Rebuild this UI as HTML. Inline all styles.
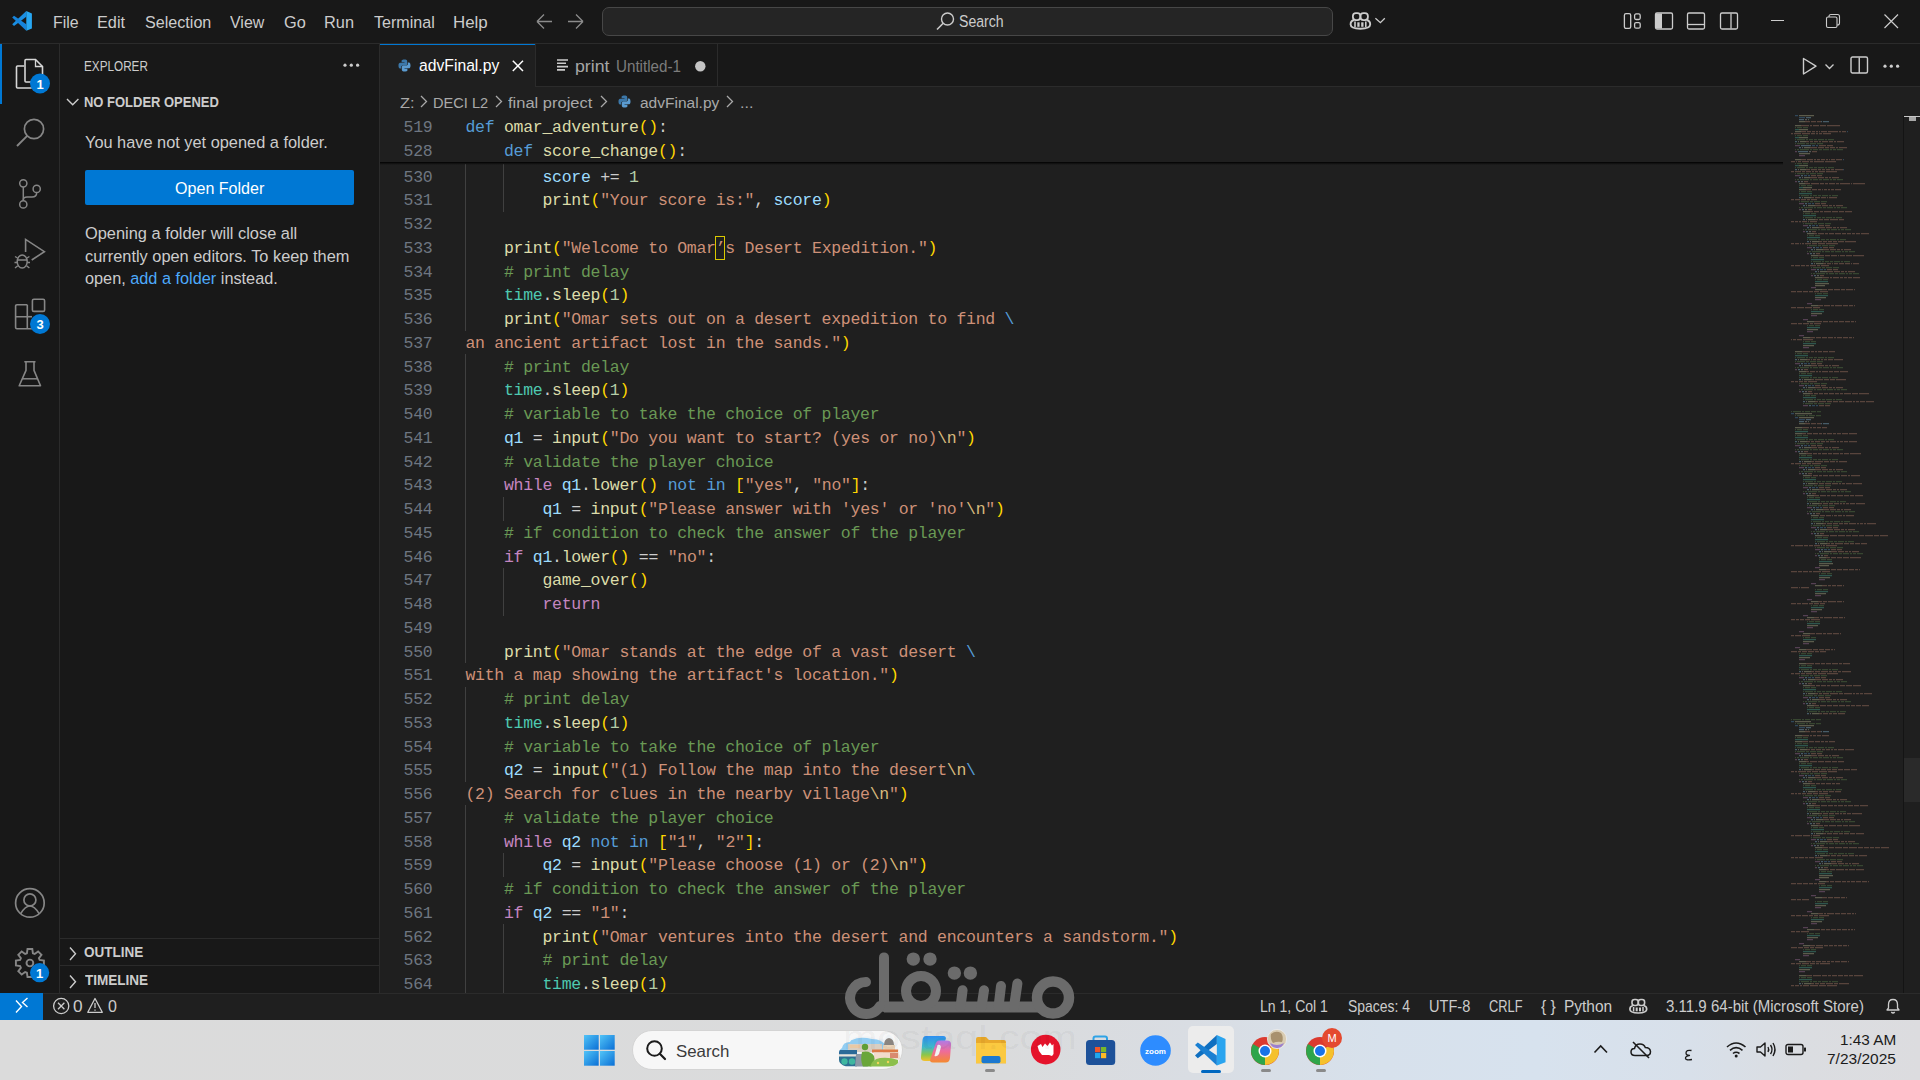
<!DOCTYPE html>
<html><head><meta charset="utf-8"><style>
*{margin:0;padding:0;box-sizing:border-box}
html,body{width:1920px;height:1080px;overflow:hidden;background:#1f1f1f;font-family:"Liberation Sans", sans-serif}
.t{position:absolute;white-space:pre;transform-origin:0 0}
.abs{position:absolute}
.code{position:absolute;left:465.4px;white-space:pre;font-family:"Liberation Mono", monospace;font-size:16.5px;letter-spacing:-0.275px;color:#cccccc;height:23.75px;line-height:23.75px}
.ln{position:absolute;width:60px;text-align:right;white-space:pre;font-family:"Liberation Mono", monospace;font-size:16.5px;letter-spacing:-0.275px;color:#6e7681;line-height:23.75px;height:23.75px}
.box{color:#ce9178}
svg{position:absolute;overflow:visible}
</style></head>
<body><div class="abs" style="left:0px;top:0px;width:1920px;height:43px;background:#181818;"></div><div class="abs" style="left:0px;top:43px;width:1920px;height:1px;background:#2b2b2b;"></div><div class="abs" style="left:0px;top:44px;width:60px;height:949px;background:#181818;"></div><div class="abs" style="left:59px;top:44px;width:1px;height:949px;background:#2b2b2b;"></div><div class="abs" style="left:60px;top:44px;width:320px;height:949px;background:#181818;"></div><div class="abs" style="left:379px;top:44px;width:1px;height:949px;background:#2b2b2b;"></div><div class="abs" style="left:380px;top:44px;width:1540px;height:43px;background:#181818;"></div><div class="abs" style="left:380px;top:86px;width:1540px;height:1px;background:#2b2b2b;"></div><div class="abs" style="left:380px;top:44px;width:155px;height:43px;background:#1f1f1f;"></div><div class="abs" style="left:380px;top:44px;width:155px;height:1px;background:#0078d4;"></div><div class="abs" style="left:535px;top:44px;width:1px;height:43px;background:#2b2b2b;"></div><div class="abs" style="left:717px;top:44px;width:1px;height:43px;background:#2b2b2b;"></div><div class="abs" style="left:0px;top:993px;width:1920px;height:27px;background:#1f1f1f;"></div><div class="abs" style="left:0px;top:993px;width:1920px;height:1px;background:#2b2b2b;"></div><div class="abs" style="left:0px;top:993px;width:43px;height:27px;background:#0078d4;"></div><div class="abs" style="left:0px;top:1020px;width:1920px;height:60px;background:linear-gradient(90deg,#dbdbdb 0%,#dadbdc 52%,#d9dde3 62%,#d7e1ec 72%,#d7e2ee 80%,#d8e0ea 88%,#dbdde1 94%,#dcdcdf 100%);"></div><svg style="left:0px;top:0px;" width="40" height="40" viewBox="0 0 40 40"><path d="M26.3 11 L26.3 16.8 L14 26 L12.2 24.2 Z" fill="#1a8fe3"/><path d="M12.2 17.5 L14 15.8 L26.3 24.3 L26.3 30.7 Z" fill="#1684dc"/><path d="M26.3 11 L31.9 13.5 V28.5 L26.3 30.7 Z" fill="#28a8f3"/></svg><div class="t" style="left:52.63px;top:10.87px;font-size:16.25px;line-height:23px;color:#cccccc;font-weight:normal;transform:scaleX(0.9788)">File</div><div class="t" style="left:97.00px;top:10.87px;font-size:16.25px;line-height:23px;color:#cccccc;font-weight:normal;transform:scaleX(1.0019)">Edit</div><div class="t" style="left:144.69px;top:10.87px;font-size:16.25px;line-height:23px;color:#cccccc;font-weight:normal;transform:scaleX(0.9923)">Selection</div><div class="t" style="left:230.44px;top:10.87px;font-size:16.25px;line-height:23px;color:#cccccc;font-weight:normal;transform:scaleX(0.9806)">View</div><div class="t" style="left:283.78px;top:10.87px;font-size:16.25px;line-height:23px;color:#cccccc;font-weight:normal;transform:scaleX(1.0043)">Go</div><div class="t" style="left:324.49px;top:10.87px;font-size:16.25px;line-height:23px;color:#cccccc;font-weight:normal;transform:scaleX(1.0050)">Run</div><div class="t" style="left:374.18px;top:10.87px;font-size:16.25px;line-height:23px;color:#cccccc;font-weight:normal;transform:scaleX(0.9896)">Terminal</div><div class="t" style="left:453.05px;top:10.87px;font-size:16.25px;line-height:23px;color:#cccccc;font-weight:normal;transform:scaleX(1.0404)">Help</div><svg style="left:536px;top:13px;" width="48" height="17" viewBox="0 0 48 17"><path d="M1 8.5 H16 M1 8.5 L8 1.5 M1 8.5 L8 15.5" stroke="#8b8b8b" stroke-width="1.3" fill="none"/><path d="M32 8.5 H47 M47 8.5 L40 1.5 M47 8.5 L40 15.5" stroke="#8b8b8b" stroke-width="1.3" fill="none"/></svg><div class="abs" style="left:602px;top:7px;width:731px;height:29px;background:#252525;border:1px solid #474747;border-radius:7px"></div><svg style="left:936px;top:12px;" width="19" height="19" viewBox="0 0 19 19"><circle cx="11.5" cy="7" r="6" stroke="#cccccc" stroke-width="1.4" fill="none"/><path d="M7.2 11.3 L1 17.5" stroke="#cccccc" stroke-width="1.6"/></svg><div class="t" style="left:959.30px;top:10.47px;font-size:16.25px;line-height:23px;color:#cccccc;font-weight:normal;transform:scaleX(0.8676)">Search</div><svg style="left:1348px;top:10px;" width="40" height="22" viewBox="0 0 40 22"><rect x="4.9" y="3.1" width="7.5" height="7" rx="3" stroke="#cccccc" stroke-width="1.8" fill="none"/><rect x="12.4" y="3.1" width="7.5" height="7" rx="3" stroke="#cccccc" stroke-width="1.8" fill="none"/><path d="M6 10 Q2.5 11 2.6 14.5 Q2.8 18.6 12.4 18.8 Q22 18.6 22.2 14.5 Q22.3 11 18.8 10" stroke="#cccccc" stroke-width="1.9" fill="none"/><path d="M7 11.5 V17" stroke="#cccccc" stroke-width="1.6"/><path d="M17.8 11.5 V17" stroke="#cccccc" stroke-width="1.6"/><rect x="9.3" y="12.3" width="2.3" height="4.5" fill="#cccccc"/><rect x="13.2" y="12.3" width="2.3" height="4.5" fill="#cccccc"/><path d="M27.4 8.2 L32.4 12.7 L36.8 8.2" stroke="#cccccc" stroke-width="1.3" fill="none"/></svg><svg style="left:1622px;top:11px;" width="120" height="20" viewBox="0 0 120 20">
<rect x="2.4" y="2.6" width="6.3" height="14.8" rx="1.6" stroke="#cccccc" stroke-width="1.3" fill="none"/>
<rect x="12.6" y="2.9" width="5.6" height="5.6" rx="1.5" stroke="#cccccc" stroke-width="1.3" fill="none"/>
<rect x="12.6" y="11.6" width="5.6" height="5.6" rx="1.5" stroke="#cccccc" stroke-width="1.3" fill="none"/>
<rect x="33.5" y="2" width="17" height="16" rx="1.5" stroke="#cccccc" stroke-width="1.3" fill="none"/>
<rect x="34" y="2.5" width="6" height="15" fill="#cccccc"/>
<rect x="65.5" y="2" width="17" height="16" rx="1.5" stroke="#cccccc" stroke-width="1.3" fill="none"/>
<path d="M66 13.5 H82" stroke="#cccccc" stroke-width="1.3"/>
<rect x="98.5" y="2" width="17" height="16" rx="1.5" stroke="#cccccc" stroke-width="1.3" fill="none"/>
<path d="M109 2.5 V17.5" stroke="#cccccc" stroke-width="1.3"/>
</svg><div class="abs" style="left:1771px;top:20px;width:13px;height:1px;background:#cccccc;"></div><svg style="left:1826px;top:14px;" width="16" height="16" viewBox="0 0 16 16"><rect x="0.5" y="3" width="10.5" height="10.5" rx="1.5" stroke="#cccccc" stroke-width="1.1" fill="none"/><path d="M3 3 V2.5 Q3 0.5 5 0.5 H11.5 Q13.5 0.5 13.5 2.5 V9 Q13.5 11 11.5 11 H11" stroke="#cccccc" stroke-width="1.1" fill="none"/></svg><svg style="left:1884px;top:14px;" width="16" height="16" viewBox="0 0 16 16"><path d="M0.5 0.5 L14 14 M14 0.5 L0.5 14" stroke="#cccccc" stroke-width="1.2"/></svg><div class="abs" style="left:0px;top:44px;width:2px;height:60px;background:#0078d4;"></div><svg style="left:14px;top:57px;" width="32" height="36" viewBox="0 0 32 36">
<path d="M10 9 H3.5 Q2.5 9 2.5 10 V30 Q2.5 31 3.5 31 H17 Q18 31 18 30 V25" stroke="#d7d7d7" stroke-width="1.6" fill="none"/>
<path d="M11 3.5 Q11 2.5 12 2.5 H21.5 L28.5 9.5 V24 Q28.5 25 27.5 25 H12 Q11 25 11 24 Z" stroke="#d7d7d7" stroke-width="1.6" fill="none"/>
<path d="M21.5 2.5 V9.5 H28.5" stroke="#d7d7d7" stroke-width="1.3" fill="none"/>
</svg><svg style="left:30px;top:73px;" width="20" height="21" viewBox="0 0 20 21"><circle cx="10" cy="10.5" r="10" fill="#0078d4"/><text x="10" y="15.5" text-anchor="middle" font-family="Liberation Sans" font-weight="bold" font-size="13" fill="#ffffff">1</text></svg><svg style="left:14px;top:116px;" width="32" height="34" viewBox="0 0 32 34"><circle cx="20" cy="13" r="9.6" stroke="#868686" stroke-width="1.7" fill="none"/><path d="M13.2 19.8 L3 30" stroke="#868686" stroke-width="1.9"/></svg><svg style="left:14px;top:176px;" width="30" height="34" viewBox="0 0 30 34">
<circle cx="9.3" cy="7.3" r="3.6" stroke="#868686" stroke-width="1.5" fill="none"/>
<circle cx="22.7" cy="12.9" r="3.6" stroke="#868686" stroke-width="1.5" fill="none"/>
<circle cx="9.3" cy="28.4" r="3.6" stroke="#868686" stroke-width="1.5" fill="none"/>
<path d="M9.3 11 V24.8" stroke="#868686" stroke-width="1.5"/>
<path d="M22.7 16.5 Q22.7 21 18 21 H13 Q9.3 21 9.3 24" stroke="#868686" stroke-width="1.5" fill="none"/>
</svg><svg style="left:10px;top:236px;" width="40" height="36" viewBox="0 0 40 36">
<path d="M15.6 16 V3.4 L34.4 15.7 L21.7 24" stroke="#868686" stroke-width="1.6" fill="none" stroke-linejoin="miter"/>
<ellipse cx="12.2" cy="25.5" rx="5" ry="6.5" stroke="#868686" stroke-width="1.5" fill="none"/>
<path d="M7.2 24 H17.2 M5 20.5 L7.5 22 M19.4 20.5 L17 22 M4.5 26.5 H7.2 M17.2 26.5 H20 M5 32 L7.8 29.8 M19.4 32 L16.6 29.8" stroke="#868686" stroke-width="1.4"/>
</svg><svg style="left:14px;top:297px;" width="32" height="34" viewBox="0 0 32 34">
<rect x="18.4" y="2.2" width="12.2" height="12.2" rx="1.5" stroke="#868686" stroke-width="1.6" fill="none"/>
<path d="M3 7.8 Q1.6 7.8 1.6 9.2 V30.5 Q1.6 31.7 3 31.7 H18 M1.6 19.7 H13.3 M13.3 7.8 H3 M13.3 7.8 V31.7" stroke="#868686" stroke-width="1.6" fill="none"/>
<path d="M13.3 19.7 H18" stroke="#868686" stroke-width="1.6"/>
</svg><svg style="left:30px;top:314px;" width="20" height="21" viewBox="0 0 20 21"><circle cx="10" cy="10" r="10" fill="#0078d4"/><text x="10" y="14.8" text-anchor="middle" font-family="Liberation Sans" font-weight="bold" font-size="13" fill="#ffffff">3</text></svg><svg style="left:16px;top:358px;" width="30" height="32" viewBox="0 0 30 32">
<path d="M8.3 3.8 H19.5 M10 3.8 V12.4 L3.2 27.7 H24.5 L18 12.4 V3.8" stroke="#868686" stroke-width="1.6" fill="none" stroke-linejoin="round"/>
<path d="M6.5 20.8 H21" stroke="#868686" stroke-width="1.5"/>
</svg><svg style="left:13px;top:886px;" width="34" height="34" viewBox="0 0 34 34"><circle cx="16.9" cy="16.9" r="14.3" stroke="#868686" stroke-width="1.7" fill="none"/><circle cx="16.9" cy="13.9" r="6" stroke="#868686" stroke-width="1.7" fill="none"/><path d="M7.7 27.6 Q16.9 12.4 26.1 27.6" stroke="#868686" stroke-width="1.7" fill="none"/></svg><svg style="left:13px;top:946px;" width="34" height="34" viewBox="0 0 34 34"><polygon points="13.89,7.26 14.50,3.00 19.30,3.00 19.91,7.26 21.66,7.98 25.10,5.41 28.49,8.80 25.92,12.24 26.64,13.99 30.90,14.60 30.90,19.40 26.64,20.01 25.92,21.76 28.49,25.20 25.10,28.59 21.66,26.02 19.91,26.74 19.30,31.00 14.50,31.00 13.89,26.74 12.14,26.02 8.70,28.59 5.31,25.20 7.88,21.76 7.16,20.01 2.90,19.40 2.90,14.60 7.16,13.99 7.88,12.24 5.31,8.80 8.70,5.41 12.14,7.98" stroke="#868686" stroke-width="1.9" fill="none" stroke-linejoin="miter"/><circle cx="16.9" cy="17" r="3.4" stroke="#868686" stroke-width="1.9" fill="none"/></svg><svg style="left:30px;top:963px;" width="20" height="20" viewBox="0 0 20 20"><circle cx="9.6" cy="9.7" r="9.6" fill="#0078d4"/><text x="9.6" y="14.5" text-anchor="middle" font-family="Liberation Sans" font-weight="bold" font-size="13" fill="#ffffff">1</text></svg><div class="t" style="left:84.46px;top:57.03px;font-size:13.75px;line-height:19px;color:#cccccc;font-weight:normal;transform:scaleX(0.8533)">EXPLORER</div><svg style="left:343px;top:63px;" width="18" height="5" viewBox="0 0 18 5"><circle cx="2" cy="2.2" r="1.6" fill="#cccccc"/><circle cx="8.3" cy="2.2" r="1.6" fill="#cccccc"/><circle cx="14.6" cy="2.2" r="1.6" fill="#cccccc"/></svg><svg style="left:66px;top:97px;" width="14" height="10" viewBox="0 0 14 10"><path d="M1 2 L6.7 7.7 L12.4 2" stroke="#cccccc" stroke-width="1.4" fill="none"/></svg><div class="t" style="left:84.49px;top:92.53px;font-size:13.75px;line-height:19px;color:#cccccc;font-weight:bold;transform:scaleX(0.9438)">NO FOLDER OPENED</div><div class="t" style="left:85.07px;top:131.17px;font-size:16.25px;line-height:23px;color:#cccccc;font-weight:normal;transform:scaleX(1.0056)">You have not yet opened a folder.</div><div class="abs" style="left:85px;top:170px;width:269px;height:35px;background:#0078d4;border-radius:2px"></div><div class="t" style="left:174.60px;top:176.67px;font-size:16.25px;line-height:23px;color:#ffffff;font-weight:normal;transform:scaleX(0.9891)">Open Folder</div><div class="t" style="left:84.58px;top:221.87px;font-size:16.25px;line-height:23px;color:#cccccc;font-weight:normal;transform:scaleX(1.0084)">Opening a folder will close all</div><div class="t" style="left:84.75px;top:244.67px;font-size:16.25px;line-height:23px;color:#cccccc;font-weight:normal;transform:scaleX(1.0069)">currently open editors. To keep them</div><div class="t" style="left:84.75px;top:267.37px;font-size:16.25px;line-height:23px;color:#cccccc;font-weight:normal;transform:scaleX(1.0016)">open, <span style="color:#4daafc">add a folder</span> instead.</div><div class="abs" style="left:60px;top:938px;width:319px;height:1px;background:#2b2b2b;"></div><div class="abs" style="left:60px;top:965px;width:319px;height:1px;background:#2b2b2b;"></div><svg style="left:68px;top:946px;" width="10" height="16" viewBox="0 0 10 16"><path d="M2 1.5 L7.5 7.7 L2 14" stroke="#cccccc" stroke-width="1.4" fill="none"/></svg><div class="t" style="left:84.46px;top:942.73px;font-size:13.75px;line-height:19px;color:#cccccc;font-weight:bold;transform:scaleX(0.9838)">OUTLINE</div><svg style="left:68px;top:974px;" width="10" height="16" viewBox="0 0 10 16"><path d="M2 1.5 L7.5 7.7 L2 14" stroke="#cccccc" stroke-width="1.4" fill="none"/></svg><div class="t" style="left:84.86px;top:970.53px;font-size:13.75px;line-height:19px;color:#cccccc;font-weight:bold;transform:scaleX(0.9839)">TIMELINE</div><svg style="left:398px;top:58.75px;" width="13" height="13" viewBox="0 0 13 13"><path d="M6.4 0.5 C3.5 0.5 3.6 1.8 3.6 1.8 V3.2 H6.5 V3.7 H2.3 C2.3 3.7 0.5 3.5 0.5 6.6 C0.5 9.7 2.1 9.6 2.1 9.6 H3.2 V8.1 C3.2 8.1 3.1 6.5 4.8 6.5 H7.6 C7.6 6.5 9.2 6.5 9.2 5 V2.2 C9.2 2.2 9.4 0.5 6.4 0.5 Z" fill="#3c78aa"/>
<path d="M6.6 12.5 C9.5 12.5 9.4 11.2 9.4 11.2 V9.8 H6.5 V9.3 H10.7 C10.7 9.3 12.5 9.5 12.5 6.4 C12.5 3.3 10.9 3.4 10.9 3.4 H9.8 V4.9 C9.8 4.9 9.9 6.5 8.2 6.5 H5.4 C5.4 6.5 3.8 6.5 3.8 8 V10.8 C3.8 10.8 3.6 12.5 6.6 12.5 Z" fill="#5b9bd0"/></svg><div class="t" style="left:419.37px;top:54.12px;font-size:16.25px;line-height:23px;color:#ffffff;font-weight:normal;transform:scaleX(0.9662)">advFinal.py</div><svg style="left:511.5px;top:60.3px;" width="12" height="12" viewBox="0 0 12 12"><path d="M0.8 0.8 L11 11 M11 0.8 L0.8 11" stroke="#ffffff" stroke-width="1.5"/></svg><svg style="left:557px;top:59px;" width="12" height="12" viewBox="0 0 12 12"><path d="M0 1 H11 M0 4.3 H9 M0 7.6 H11 M0 10.9 H8" stroke="#cccccc" stroke-width="1.6"/></svg><div class="t" style="left:575.34px;top:54.97px;font-size:16.25px;line-height:23px;color:#a6a6a6;font-weight:normal;transform:scaleX(1.0900)">print</div><div class="t" style="left:616.29px;top:54.97px;font-size:16.25px;line-height:23px;color:#7c7c7c;font-weight:normal;transform:scaleX(0.9342)">Untitled-1</div><svg style="left:694.5px;top:60.7px;" width="11" height="11" viewBox="0 0 11 11"><circle cx="5.3" cy="5.3" r="5.2" fill="#c4c4c4"/></svg><svg style="left:1802px;top:57px;" width="36" height="20" viewBox="0 0 36 20"><path d="M1.5 1.5 L14 9.2 L1.5 17 Z" stroke="#cccccc" stroke-width="1.4" fill="none" stroke-linejoin="round"/><path d="M23.5 7.5 L27.5 11.5 L31.5 7.5" stroke="#cccccc" stroke-width="1.3" fill="none"/></svg><svg style="left:1850px;top:56px;" width="20" height="20" viewBox="0 0 20 20"><rect x="1" y="1" width="16.5" height="16" rx="1.5" stroke="#cccccc" stroke-width="1.4" fill="none"/><path d="M9.25 1.5 V17" stroke="#cccccc" stroke-width="1.4"/></svg><svg style="left:1883px;top:64px;" width="18" height="5" viewBox="0 0 18 5"><circle cx="2" cy="2.2" r="1.6" fill="#cccccc"/><circle cx="8.3" cy="2.2" r="1.6" fill="#cccccc"/><circle cx="14.6" cy="2.2" r="1.6" fill="#cccccc"/></svg><div class="t" style="left:399.51px;top:91.63px;font-size:15.5px;line-height:22px;color:#a9a9a9;font-weight:normal;transform:scaleX(1.0557)">Z:</div><svg style="left:419.5px;top:95px;" width="8" height="13" viewBox="0 0 8 13"><path d="M1 1 L6.5 6.5 L1 12" stroke="#a9a9a9" stroke-width="1.3" fill="none"/></svg><div class="t" style="left:432.58px;top:91.63px;font-size:15.5px;line-height:22px;color:#a9a9a9;font-weight:normal;transform:scaleX(0.9412)">DECI L2</div><svg style="left:494.5px;top:95px;" width="8" height="13" viewBox="0 0 8 13"><path d="M1 1 L6.5 6.5 L1 12" stroke="#a9a9a9" stroke-width="1.3" fill="none"/></svg><div class="t" style="left:508.24px;top:91.63px;font-size:15.5px;line-height:22px;color:#a9a9a9;font-weight:normal;transform:scaleX(1.0639)">final project</div><svg style="left:599.5px;top:95px;" width="8" height="13" viewBox="0 0 8 13"><path d="M1 1 L6.5 6.5 L1 12" stroke="#a9a9a9" stroke-width="1.3" fill="none"/></svg><svg style="left:618px;top:94.5px;" width="13" height="13" viewBox="0 0 13 13"><path d="M6.4 0.5 C3.5 0.5 3.6 1.8 3.6 1.8 V3.2 H6.5 V3.7 H2.3 C2.3 3.7 0.5 3.5 0.5 6.6 C0.5 9.7 2.1 9.6 2.1 9.6 H3.2 V8.1 C3.2 8.1 3.1 6.5 4.8 6.5 H7.6 C7.6 6.5 9.2 6.5 9.2 5 V2.2 C9.2 2.2 9.4 0.5 6.4 0.5 Z" fill="#3c78aa"/>
<path d="M6.6 12.5 C9.5 12.5 9.4 11.2 9.4 11.2 V9.8 H6.5 V9.3 H10.7 C10.7 9.3 12.5 9.5 12.5 6.4 C12.5 3.3 10.9 3.4 10.9 3.4 H9.8 V4.9 C9.8 4.9 9.9 6.5 8.2 6.5 H5.4 C5.4 6.5 3.8 6.5 3.8 8 V10.8 C3.8 10.8 3.6 12.5 6.6 12.5 Z" fill="#5b9bd0"/></svg><div class="t" style="left:640.38px;top:91.63px;font-size:15.5px;line-height:22px;color:#a9a9a9;font-weight:normal;transform:scaleX(1.0002)">advFinal.py</div><svg style="left:726px;top:95px;" width="8" height="13" viewBox="0 0 8 13"><path d="M1 1 L6.5 6.5 L1 12" stroke="#a9a9a9" stroke-width="1.3" fill="none"/></svg><div class="t" style="left:739.55px;top:91.63px;font-size:15.5px;line-height:22px;color:#a9a9a9;font-weight:normal;transform:scaleX(1.0362)">...</div><div class="abs" style="left:465px;top:164.00px;width:1px;height:24.25px;background:#404040"></div><div class="abs" style="left:503px;top:164.00px;width:1px;height:24.25px;background:#404040"></div><div class="ln" style="left:372.4px;top:165.73px">530</div><div class="code" style="top:165.73px">        <span style="color:#9cdcfe">score</span><span style="color:#cccccc"> += </span><span style="color:#b5cea8">1</span></div><div class="abs" style="left:465px;top:187.75px;width:1px;height:24.25px;background:#404040"></div><div class="abs" style="left:503px;top:187.75px;width:1px;height:24.25px;background:#404040"></div><div class="ln" style="left:372.4px;top:189.48px">531</div><div class="code" style="top:189.48px">        <span style="color:#dcdcaa">print</span><span style="color:#ffd700">(</span><span style="color:#ce9178">&quot;Your score is:&quot;</span><span style="color:#cccccc">, </span><span style="color:#9cdcfe">score</span><span style="color:#ffd700">)</span></div><div class="abs" style="left:465px;top:211.50px;width:1px;height:24.25px;background:#404040"></div><div class="ln" style="left:372.4px;top:213.23px">532</div><div class="code" style="top:213.23px"></div><div class="abs" style="left:465px;top:235.25px;width:1px;height:24.25px;background:#404040"></div><div class="ln" style="left:372.4px;top:236.98px">533</div><div class="code" style="top:236.98px">    <span style="color:#dcdcaa">print</span><span style="color:#ffd700">(</span><span style="color:#ce9178">&quot;Welcome to Omar</span><span class="box">’</span><span style="color:#ce9178">s Desert Expedition.&quot;</span><span style="color:#ffd700">)</span></div><div class="abs" style="left:465px;top:259.00px;width:1px;height:24.25px;background:#404040"></div><div class="ln" style="left:372.4px;top:260.73px">534</div><div class="code" style="top:260.73px">    <span style="color:#6a9955"># print delay</span></div><div class="abs" style="left:465px;top:282.75px;width:1px;height:24.25px;background:#404040"></div><div class="ln" style="left:372.4px;top:284.48px">535</div><div class="code" style="top:284.48px">    <span style="color:#4ec9b0">time</span><span style="color:#cccccc">.</span><span style="color:#dcdcaa">sleep</span><span style="color:#ffd700">(</span><span style="color:#b5cea8">1</span><span style="color:#ffd700">)</span></div><div class="abs" style="left:465px;top:306.50px;width:1px;height:24.25px;background:#404040"></div><div class="ln" style="left:372.4px;top:308.23px">536</div><div class="code" style="top:308.23px">    <span style="color:#dcdcaa">print</span><span style="color:#ffd700">(</span><span style="color:#ce9178">&quot;Omar sets out on a desert expedition to find </span><span style="color:#569cd6">\</span></div><div class="ln" style="left:372.4px;top:331.98px">537</div><div class="code" style="top:331.98px"><span style="color:#ce9178">an ancient artifact lost in the sands.&quot;</span><span style="color:#ffd700">)</span></div><div class="abs" style="left:465px;top:354.00px;width:1px;height:24.25px;background:#404040"></div><div class="ln" style="left:372.4px;top:355.73px">538</div><div class="code" style="top:355.73px">    <span style="color:#6a9955"># print delay</span></div><div class="abs" style="left:465px;top:377.75px;width:1px;height:24.25px;background:#404040"></div><div class="ln" style="left:372.4px;top:379.48px">539</div><div class="code" style="top:379.48px">    <span style="color:#4ec9b0">time</span><span style="color:#cccccc">.</span><span style="color:#dcdcaa">sleep</span><span style="color:#ffd700">(</span><span style="color:#b5cea8">1</span><span style="color:#ffd700">)</span></div><div class="abs" style="left:465px;top:401.50px;width:1px;height:24.25px;background:#404040"></div><div class="ln" style="left:372.4px;top:403.23px">540</div><div class="code" style="top:403.23px">    <span style="color:#6a9955"># variable to take the choice of player</span></div><div class="abs" style="left:465px;top:425.25px;width:1px;height:24.25px;background:#404040"></div><div class="ln" style="left:372.4px;top:426.98px">541</div><div class="code" style="top:426.98px">    <span style="color:#9cdcfe">q1</span><span style="color:#cccccc"> = </span><span style="color:#dcdcaa">input</span><span style="color:#ffd700">(</span><span style="color:#ce9178">&quot;Do you want to start? (yes or no)</span><span style="color:#d7ba7d">\n</span><span style="color:#ce9178">&quot;</span><span style="color:#ffd700">)</span></div><div class="abs" style="left:465px;top:449.00px;width:1px;height:24.25px;background:#404040"></div><div class="ln" style="left:372.4px;top:450.73px">542</div><div class="code" style="top:450.73px">    <span style="color:#6a9955"># validate the player choice</span></div><div class="abs" style="left:465px;top:472.75px;width:1px;height:24.25px;background:#404040"></div><div class="ln" style="left:372.4px;top:474.48px">543</div><div class="code" style="top:474.48px">    <span style="color:#c586c0">while</span><span style="color:#cccccc"> </span><span style="color:#9cdcfe">q1</span><span style="color:#cccccc">.</span><span style="color:#dcdcaa">lower</span><span style="color:#ffd700">()</span><span style="color:#cccccc"> </span><span style="color:#569cd6">not</span><span style="color:#cccccc"> </span><span style="color:#569cd6">in</span><span style="color:#cccccc"> </span><span style="color:#ffd700">[</span><span style="color:#ce9178">&quot;yes&quot;</span><span style="color:#cccccc">, </span><span style="color:#ce9178">&quot;no&quot;</span><span style="color:#ffd700">]</span><span style="color:#cccccc">:</span></div><div class="abs" style="left:465px;top:496.50px;width:1px;height:24.25px;background:#404040"></div><div class="abs" style="left:503px;top:496.50px;width:1px;height:24.25px;background:#404040"></div><div class="ln" style="left:372.4px;top:498.23px">544</div><div class="code" style="top:498.23px">        <span style="color:#9cdcfe">q1</span><span style="color:#cccccc"> = </span><span style="color:#dcdcaa">input</span><span style="color:#ffd700">(</span><span style="color:#ce9178">&quot;Please answer with &#x27;yes&#x27; or &#x27;no&#x27;</span><span style="color:#d7ba7d">\n</span><span style="color:#ce9178">&quot;</span><span style="color:#ffd700">)</span></div><div class="abs" style="left:465px;top:520.25px;width:1px;height:24.25px;background:#404040"></div><div class="ln" style="left:372.4px;top:521.98px">545</div><div class="code" style="top:521.98px">    <span style="color:#6a9955"># if condition to check the answer of the player</span></div><div class="abs" style="left:465px;top:544.00px;width:1px;height:24.25px;background:#404040"></div><div class="ln" style="left:372.4px;top:545.73px">546</div><div class="code" style="top:545.73px">    <span style="color:#c586c0">if</span><span style="color:#cccccc"> </span><span style="color:#9cdcfe">q1</span><span style="color:#cccccc">.</span><span style="color:#dcdcaa">lower</span><span style="color:#ffd700">()</span><span style="color:#cccccc"> == </span><span style="color:#ce9178">&quot;no&quot;</span><span style="color:#cccccc">:</span></div><div class="abs" style="left:465px;top:567.75px;width:1px;height:24.25px;background:#404040"></div><div class="abs" style="left:503px;top:567.75px;width:1px;height:24.25px;background:#404040"></div><div class="ln" style="left:372.4px;top:569.48px">547</div><div class="code" style="top:569.48px">        <span style="color:#dcdcaa">game_over</span><span style="color:#ffd700">()</span></div><div class="abs" style="left:465px;top:591.50px;width:1px;height:24.25px;background:#404040"></div><div class="abs" style="left:503px;top:591.50px;width:1px;height:24.25px;background:#404040"></div><div class="ln" style="left:372.4px;top:593.23px">548</div><div class="code" style="top:593.23px">        <span style="color:#c586c0">return</span></div><div class="abs" style="left:465px;top:615.25px;width:1px;height:24.25px;background:#404040"></div><div class="ln" style="left:372.4px;top:616.98px">549</div><div class="code" style="top:616.98px"></div><div class="abs" style="left:465px;top:639.00px;width:1px;height:24.25px;background:#404040"></div><div class="ln" style="left:372.4px;top:640.73px">550</div><div class="code" style="top:640.73px">    <span style="color:#dcdcaa">print</span><span style="color:#ffd700">(</span><span style="color:#ce9178">&quot;Omar stands at the edge of a vast desert </span><span style="color:#569cd6">\</span></div><div class="ln" style="left:372.4px;top:664.48px">551</div><div class="code" style="top:664.48px"><span style="color:#ce9178">with a map showing the artifact&#x27;s location.&quot;</span><span style="color:#ffd700">)</span></div><div class="abs" style="left:465px;top:686.50px;width:1px;height:24.25px;background:#404040"></div><div class="ln" style="left:372.4px;top:688.23px">552</div><div class="code" style="top:688.23px">    <span style="color:#6a9955"># print delay</span></div><div class="abs" style="left:465px;top:710.25px;width:1px;height:24.25px;background:#404040"></div><div class="ln" style="left:372.4px;top:711.98px">553</div><div class="code" style="top:711.98px">    <span style="color:#4ec9b0">time</span><span style="color:#cccccc">.</span><span style="color:#dcdcaa">sleep</span><span style="color:#ffd700">(</span><span style="color:#b5cea8">1</span><span style="color:#ffd700">)</span></div><div class="abs" style="left:465px;top:734.00px;width:1px;height:24.25px;background:#404040"></div><div class="ln" style="left:372.4px;top:735.73px">554</div><div class="code" style="top:735.73px">    <span style="color:#6a9955"># variable to take the choice of player</span></div><div class="abs" style="left:465px;top:757.75px;width:1px;height:24.25px;background:#404040"></div><div class="ln" style="left:372.4px;top:759.48px">555</div><div class="code" style="top:759.48px">    <span style="color:#9cdcfe">q2</span><span style="color:#cccccc"> = </span><span style="color:#dcdcaa">input</span><span style="color:#ffd700">(</span><span style="color:#ce9178">&quot;(1) Follow the map into the desert</span><span style="color:#d7ba7d">\n</span><span style="color:#569cd6">\</span></div><div class="ln" style="left:372.4px;top:783.23px">556</div><div class="code" style="top:783.23px"><span style="color:#ce9178">(2) Search for clues in the nearby village</span><span style="color:#d7ba7d">\n</span><span style="color:#ce9178">&quot;</span><span style="color:#ffd700">)</span></div><div class="abs" style="left:465px;top:805.25px;width:1px;height:24.25px;background:#404040"></div><div class="ln" style="left:372.4px;top:806.98px">557</div><div class="code" style="top:806.98px">    <span style="color:#6a9955"># validate the player choice</span></div><div class="abs" style="left:465px;top:829.00px;width:1px;height:24.25px;background:#404040"></div><div class="ln" style="left:372.4px;top:830.73px">558</div><div class="code" style="top:830.73px">    <span style="color:#c586c0">while</span><span style="color:#cccccc"> </span><span style="color:#9cdcfe">q2</span><span style="color:#cccccc"> </span><span style="color:#569cd6">not</span><span style="color:#cccccc"> </span><span style="color:#569cd6">in</span><span style="color:#cccccc"> </span><span style="color:#ffd700">[</span><span style="color:#ce9178">&quot;1&quot;</span><span style="color:#cccccc">, </span><span style="color:#ce9178">&quot;2&quot;</span><span style="color:#ffd700">]</span><span style="color:#cccccc">:</span></div><div class="abs" style="left:465px;top:852.75px;width:1px;height:24.25px;background:#404040"></div><div class="abs" style="left:503px;top:852.75px;width:1px;height:24.25px;background:#404040"></div><div class="ln" style="left:372.4px;top:854.48px">559</div><div class="code" style="top:854.48px">        <span style="color:#9cdcfe">q2</span><span style="color:#cccccc"> = </span><span style="color:#dcdcaa">input</span><span style="color:#ffd700">(</span><span style="color:#ce9178">&quot;Please choose (1) or (2)</span><span style="color:#d7ba7d">\n</span><span style="color:#ce9178">&quot;</span><span style="color:#ffd700">)</span></div><div class="abs" style="left:465px;top:876.50px;width:1px;height:24.25px;background:#404040"></div><div class="ln" style="left:372.4px;top:878.23px">560</div><div class="code" style="top:878.23px">    <span style="color:#6a9955"># if condition to check the answer of the player</span></div><div class="abs" style="left:465px;top:900.25px;width:1px;height:24.25px;background:#404040"></div><div class="ln" style="left:372.4px;top:901.98px">561</div><div class="code" style="top:901.98px">    <span style="color:#c586c0">if</span><span style="color:#cccccc"> </span><span style="color:#9cdcfe">q2</span><span style="color:#cccccc"> == </span><span style="color:#ce9178">&quot;1&quot;</span><span style="color:#cccccc">:</span></div><div class="abs" style="left:465px;top:924.00px;width:1px;height:24.25px;background:#404040"></div><div class="abs" style="left:503px;top:924.00px;width:1px;height:24.25px;background:#404040"></div><div class="ln" style="left:372.4px;top:925.73px">562</div><div class="code" style="top:925.73px">        <span style="color:#dcdcaa">print</span><span style="color:#ffd700">(</span><span style="color:#ce9178">&quot;Omar ventures into the desert and encounters a sandstorm.&quot;</span><span style="color:#ffd700">)</span></div><div class="abs" style="left:465px;top:947.75px;width:1px;height:24.25px;background:#404040"></div><div class="abs" style="left:503px;top:947.75px;width:1px;height:24.25px;background:#404040"></div><div class="ln" style="left:372.4px;top:949.48px">563</div><div class="code" style="top:949.48px">        <span style="color:#6a9955"># print delay</span></div><div class="abs" style="left:465px;top:971.50px;width:1px;height:21.50px;background:#404040"></div><div class="abs" style="left:503px;top:971.50px;width:1px;height:21.50px;background:#404040"></div><div class="ln" style="left:372.4px;top:973.23px">564</div><div class="code" style="top:973.23px">        <span style="color:#4ec9b0">time</span><span style="color:#cccccc">.</span><span style="color:#dcdcaa">sleep</span><span style="color:#ffd700">(</span><span style="color:#b5cea8">1</span><span style="color:#ffd700">)</span></div><div class="abs" style="left:715px;top:236px;width:10px;height:24px;background:transparent;border:1.4px solid #d9c800"></div><div class="abs" style="left:380px;top:114px;width:1403px;height:48px;background:#1f1f1f;"></div><div class="abs" style="left:380px;top:162px;width:1403px;height:3px;background:linear-gradient(#000000 0%,rgba(0,0,0,0.35) 60%,rgba(0,0,0,0) 100%);"></div><div class="ln" style="left:372.4px;top:115.73px">519</div><div class="code" style="top:115.73px"><span style="color:#569cd6">def</span><span style="color:#cccccc"> </span><span style="color:#dcdcaa">omar_adventure</span><span style="color:#ffd700">()</span><span style="color:#cccccc">:</span></div><div class="ln" style="left:372.4px;top:139.73px">528</div><div class="code" style="top:139.73px">    <span style="color:#569cd6">def</span><span style="color:#cccccc"> </span><span style="color:#dcdcaa">score_change</span><span style="color:#ffd700">()</span><span style="color:#cccccc">:</span></div><svg style="left:0;top:0" width="1920" height="1080" viewBox="0 0 1920 1080"><path d="M1795 115h3v1.2h-3zM1799 117h6v1.2h-6zM1847 131h1v1.2h-1zM1812 145h3v1.2h-3zM1816 145h2v1.2h-2zM1843 159h1v1.2h-1zM1843 169h1v1.2h-1zM1804 175h3v1.2h-3zM1808 175h2v1.2h-2zM1808 203h3v1.2h-3zM1812 203h2v1.2h-2zM1812 225h3v1.2h-3zM1816 225h2v1.2h-2zM1816 247h3v1.2h-3zM1820 247h2v1.2h-2zM1820 269h3v1.2h-3zM1824 269h2v1.2h-2zM1804 363h3v1.2h-3zM1808 363h2v1.2h-2zM1808 385h3v1.2h-3zM1812 385h2v1.2h-2zM1812 405h3v1.2h-3zM1816 405h2v1.2h-2zM1791 413h3v1.2h-3zM1795 417h3v1.2h-3zM1799 419h6v1.2h-6zM1804 445h3v1.2h-3zM1808 445h2v1.2h-2zM1808 467h3v1.2h-3zM1812 467h2v1.2h-2zM1812 487h3v1.2h-3zM1816 487h2v1.2h-2zM1816 507h3v1.2h-3zM1820 507h2v1.2h-2zM1820 527h3v1.2h-3zM1824 527h2v1.2h-2zM1824 549h3v1.2h-3zM1828 549h2v1.2h-2zM1808 677h3v1.2h-3zM1812 677h2v1.2h-2zM1812 697h3v1.2h-3zM1816 697h2v1.2h-2zM1791 721h3v1.2h-3zM1795 725h3v1.2h-3zM1799 727h6v1.2h-6zM1804 753h3v1.2h-3zM1808 753h2v1.2h-2zM1808 775h3v1.2h-3zM1812 775h2v1.2h-2zM1812 797h3v1.2h-3zM1816 797h2v1.2h-2zM1816 817h3v1.2h-3zM1820 817h2v1.2h-2zM1820 839h3v1.2h-3zM1824 839h2v1.2h-2zM1824 861h3v1.2h-3zM1828 861h2v1.2h-2z" fill="#569cd6" fill-opacity="0.33"/><path d="M1799 115h15v1.2h-15zM1799 121h6v1.2h-6zM1795 125h6v1.2h-6zM1799 129h9v1.2h-9zM1795 131h6v1.2h-6zM1799 137h9v1.2h-9zM1800 141h6v1.2h-6zM1804 147h6v1.2h-6zM1799 153h11v1.2h-11zM1795 159h6v1.2h-6zM1799 165h9v1.2h-9zM1800 169h6v1.2h-6zM1804 177h6v1.2h-6zM1799 183h6v1.2h-6zM1803 187h9v1.2h-9zM1799 189h7v1.2h-7zM1804 197h7v1.2h-7zM1808 205h7v1.2h-7zM1803 211h7v1.2h-7zM1808 219h7v1.2h-7zM1812 227h7v1.2h-7zM1807 233h7v1.2h-7zM1812 241h7v1.2h-7zM1816 249h7v1.2h-7zM1811 255h7v1.2h-7zM1816 263h7v1.2h-7zM1820 271h7v1.2h-7zM1815 277h7v1.2h-7zM1815 283h14v1.2h-14zM1815 285h10v1.2h-10zM1815 289h7v1.2h-7zM1815 297h11v1.2h-11zM1811 305h7v1.2h-7zM1811 313h11v1.2h-11zM1807 321h7v1.2h-7zM1807 329h11v1.2h-11zM1803 337h7v1.2h-7zM1803 345h11v1.2h-11zM1795 351h7v1.2h-7zM1800 359h7v1.2h-7zM1804 365h7v1.2h-7zM1799 371h7v1.2h-7zM1804 379h7v1.2h-7zM1808 387h7v1.2h-7zM1803 393h7v1.2h-7zM1808 401h7v1.2h-7zM1795 413h17v1.2h-17zM1799 417h15v1.2h-15zM1799 423h6v1.2h-6zM1795 427h7v1.2h-7zM1795 433h7v1.2h-7zM1800 441h7v1.2h-7zM1804 447h7v1.2h-7zM1799 453h7v1.2h-7zM1804 461h7v1.2h-7zM1808 469h7v1.2h-7zM1803 475h7v1.2h-7zM1808 483h7v1.2h-7zM1812 489h7v1.2h-7zM1807 495h7v1.2h-7zM1812 503h7v1.2h-7zM1816 509h7v1.2h-7zM1811 515h7v1.2h-7zM1816 523h7v1.2h-7zM1820 529h7v1.2h-7zM1815 535h7v1.2h-7zM1820 543h7v1.2h-7zM1824 551h7v1.2h-7zM1819 557h7v1.2h-7zM1819 563h14v1.2h-14zM1819 565h10v1.2h-10zM1819 569h7v1.2h-7zM1819 577h11v1.2h-11zM1815 585h7v1.2h-7zM1815 593h11v1.2h-11zM1811 601h7v1.2h-7zM1811 609h11v1.2h-11zM1807 617h7v1.2h-7zM1807 625h11v1.2h-11zM1803 633h7v1.2h-7zM1803 641h11v1.2h-11zM1799 649h7v1.2h-7zM1799 657h11v1.2h-11zM1799 663h7v1.2h-7zM1804 671h7v1.2h-7zM1808 679h7v1.2h-7zM1803 685h7v1.2h-7zM1808 693h7v1.2h-7zM1812 699h7v1.2h-7zM1807 705h7v1.2h-7zM1812 713h7v1.2h-7zM1795 721h16v1.2h-16zM1799 725h15v1.2h-15zM1799 731h6v1.2h-6zM1795 735h7v1.2h-7zM1795 741h7v1.2h-7zM1800 749h7v1.2h-7zM1804 755h7v1.2h-7zM1799 761h7v1.2h-7zM1804 769h7v1.2h-7zM1808 777h7v1.2h-7zM1803 783h7v1.2h-7zM1808 791h7v1.2h-7zM1812 799h7v1.2h-7zM1807 805h7v1.2h-7zM1812 813h7v1.2h-7zM1816 819h7v1.2h-7zM1811 825h7v1.2h-7zM1816 833h7v1.2h-7zM1820 841h7v1.2h-7zM1815 847h7v1.2h-7zM1820 855h7v1.2h-7zM1824 863h7v1.2h-7zM1819 869h7v1.2h-7zM1819 875h14v1.2h-14zM1819 877h10v1.2h-10zM1819 881h7v1.2h-7zM1819 889h11v1.2h-11zM1815 897h7v1.2h-7zM1815 905h11v1.2h-11zM1811 913h7v1.2h-7zM1811 921h11v1.2h-11zM1807 929h7v1.2h-7zM1807 937h11v1.2h-11zM1803 945h7v1.2h-7zM1803 953h11v1.2h-11zM1799 961h7v1.2h-7zM1799 969h11v1.2h-11zM1799 975h7v1.2h-7zM1804 983h7v1.2h-7z" fill="#dcdcaa" fill-opacity="0.33"/><path d="M1806 117h5v1.2h-5zM1799 119h5v1.2h-5zM1821 121h1v1.2h-1zM1823 121h6v1.2h-6zM1795 141h2v1.2h-2zM1801 145h10v1.2h-10zM1799 147h2v1.2h-2zM1798 151h10v1.2h-10zM1795 169h2v1.2h-2zM1801 175h2v1.2h-2zM1799 177h2v1.2h-2zM1798 181h2v1.2h-2zM1799 197h2v1.2h-2zM1805 203h2v1.2h-2zM1803 205h2v1.2h-2zM1802 209h2v1.2h-2zM1803 219h2v1.2h-2zM1809 225h2v1.2h-2zM1807 227h2v1.2h-2zM1806 231h2v1.2h-2zM1807 241h2v1.2h-2zM1813 247h2v1.2h-2zM1811 249h2v1.2h-2zM1810 253h2v1.2h-2zM1811 263h2v1.2h-2zM1817 269h2v1.2h-2zM1815 271h2v1.2h-2zM1814 275h2v1.2h-2zM1795 359h2v1.2h-2zM1801 363h2v1.2h-2zM1799 365h2v1.2h-2zM1798 369h2v1.2h-2zM1799 379h2v1.2h-2zM1805 385h2v1.2h-2zM1803 387h2v1.2h-2zM1802 391h2v1.2h-2zM1803 401h2v1.2h-2zM1809 405h2v1.2h-2zM1806 419h5v1.2h-5zM1799 421h5v1.2h-5zM1821 423h1v1.2h-1zM1823 423h6v1.2h-6zM1795 441h2v1.2h-2zM1801 445h2v1.2h-2zM1799 447h2v1.2h-2zM1798 451h2v1.2h-2zM1799 461h2v1.2h-2zM1805 467h2v1.2h-2zM1803 469h2v1.2h-2zM1802 473h2v1.2h-2zM1803 483h2v1.2h-2zM1809 487h2v1.2h-2zM1807 489h2v1.2h-2zM1806 493h2v1.2h-2zM1807 503h2v1.2h-2zM1813 507h2v1.2h-2zM1811 509h2v1.2h-2zM1810 513h2v1.2h-2zM1811 523h2v1.2h-2zM1817 527h2v1.2h-2zM1815 529h2v1.2h-2zM1814 533h2v1.2h-2zM1815 543h2v1.2h-2zM1821 549h2v1.2h-2zM1819 551h2v1.2h-2zM1818 555h2v1.2h-2zM1799 671h2v1.2h-2zM1805 677h2v1.2h-2zM1803 679h2v1.2h-2zM1802 683h2v1.2h-2zM1803 693h2v1.2h-2zM1809 697h2v1.2h-2zM1807 699h2v1.2h-2zM1806 703h2v1.2h-2zM1807 713h2v1.2h-2zM1806 727h5v1.2h-5zM1799 729h5v1.2h-5zM1821 731h1v1.2h-1zM1823 731h6v1.2h-6zM1795 749h2v1.2h-2zM1801 753h2v1.2h-2zM1799 755h2v1.2h-2zM1798 759h2v1.2h-2zM1799 769h2v1.2h-2zM1805 775h2v1.2h-2zM1803 777h2v1.2h-2zM1802 781h2v1.2h-2zM1803 791h2v1.2h-2zM1809 797h2v1.2h-2zM1807 799h2v1.2h-2zM1806 803h2v1.2h-2zM1807 813h2v1.2h-2zM1813 817h2v1.2h-2zM1811 819h2v1.2h-2zM1810 823h2v1.2h-2zM1811 833h2v1.2h-2zM1817 839h2v1.2h-2zM1815 841h2v1.2h-2zM1814 845h2v1.2h-2zM1815 855h2v1.2h-2zM1821 861h2v1.2h-2zM1819 863h2v1.2h-2zM1818 867h2v1.2h-2zM1799 983h2v1.2h-2z" fill="#9cdcfe" fill-opacity="0.33"/><path d="M1805 119h2v1.2h-2zM1798 141h1v1.2h-1zM1802 147h1v1.2h-1zM1809 151h2v1.2h-2zM1798 169h1v1.2h-1zM1802 177h1v1.2h-1zM1801 181h2v1.2h-2zM1802 197h1v1.2h-1zM1806 205h1v1.2h-1zM1805 209h2v1.2h-2zM1806 219h1v1.2h-1zM1810 227h1v1.2h-1zM1809 231h2v1.2h-2zM1810 241h1v1.2h-1zM1814 249h1v1.2h-1zM1813 253h2v1.2h-2zM1814 263h1v1.2h-1zM1818 271h1v1.2h-1zM1817 275h2v1.2h-2zM1798 359h1v1.2h-1zM1802 365h1v1.2h-1zM1801 369h2v1.2h-2zM1802 379h1v1.2h-1zM1806 387h1v1.2h-1zM1805 391h2v1.2h-2zM1806 401h1v1.2h-1zM1805 421h2v1.2h-2zM1798 441h1v1.2h-1zM1802 447h1v1.2h-1zM1801 451h2v1.2h-2zM1802 461h1v1.2h-1zM1806 469h1v1.2h-1zM1805 473h2v1.2h-2zM1806 483h1v1.2h-1zM1810 489h1v1.2h-1zM1809 493h2v1.2h-2zM1810 503h1v1.2h-1zM1814 509h1v1.2h-1zM1813 513h2v1.2h-2zM1814 523h1v1.2h-1zM1818 529h1v1.2h-1zM1817 533h2v1.2h-2zM1818 543h1v1.2h-1zM1822 551h1v1.2h-1zM1821 555h2v1.2h-2zM1802 671h1v1.2h-1zM1806 679h1v1.2h-1zM1805 683h2v1.2h-2zM1806 693h1v1.2h-1zM1810 699h1v1.2h-1zM1809 703h2v1.2h-2zM1810 713h1v1.2h-1zM1805 729h2v1.2h-2zM1798 749h1v1.2h-1zM1802 755h1v1.2h-1zM1801 759h2v1.2h-2zM1802 769h1v1.2h-1zM1806 777h1v1.2h-1zM1805 781h2v1.2h-2zM1806 791h1v1.2h-1zM1810 799h1v1.2h-1zM1809 803h2v1.2h-2zM1810 813h1v1.2h-1zM1814 819h1v1.2h-1zM1813 823h2v1.2h-2zM1814 833h1v1.2h-1zM1818 841h1v1.2h-1zM1817 845h2v1.2h-2zM1818 855h1v1.2h-1zM1822 863h1v1.2h-1zM1821 867h2v1.2h-2zM1802 983h1v1.2h-1z" fill="#cccccc" fill-opacity="0.33"/><path d="M1808 119h1v1.2h-1zM1808 421h1v1.2h-1zM1808 729h1v1.2h-1z" fill="#b5cea8" fill-opacity="0.33"/><path d="M1805 121h5v1.2h-5zM1811 121h5v1.2h-5zM1817 121h4v1.2h-4zM1801 125h8v1.2h-8zM1810 125h2v1.2h-2zM1813 125h6v1.2h-6zM1820 125h6v1.2h-6zM1827 125h13v1.2h-13zM1801 131h5v1.2h-5zM1807 131h4v1.2h-4zM1812 131h3v1.2h-3zM1816 131h2v1.2h-2zM1819 131h1v1.2h-1zM1821 131h6v1.2h-6zM1828 131h10v1.2h-10zM1839 131h2v1.2h-2zM1842 131h4v1.2h-4zM1791 133h2v1.2h-2zM1794 133h7v1.2h-7zM1802 133h8v1.2h-8zM1811 133h4v1.2h-4zM1816 133h2v1.2h-2zM1819 133h3v1.2h-3zM1823 133h8v1.2h-8zM1806 141h3v1.2h-3zM1810 141h3v1.2h-3zM1814 141h4v1.2h-4zM1819 141h2v1.2h-2zM1822 141h6v1.2h-6zM1829 141h4v1.2h-4zM1834 141h2v1.2h-2zM1837 141h7v1.2h-7zM1819 145h7v1.2h-7zM1827 145h6v1.2h-6zM1810 147h7v1.2h-7zM1818 147h6v1.2h-6zM1825 147h4v1.2h-4zM1830 147h5v1.2h-5zM1836 147h2v1.2h-2zM1839 147h8v1.2h-8zM1812 151h5v1.2h-5zM1801 159h5v1.2h-5zM1807 159h6v1.2h-6zM1814 159h2v1.2h-2zM1817 159h3v1.2h-3zM1821 159h4v1.2h-4zM1826 159h2v1.2h-2zM1829 159h1v1.2h-1zM1831 159h4v1.2h-4zM1836 159h6v1.2h-6zM1791 161h4v1.2h-4zM1796 161h1v1.2h-1zM1798 161h3v1.2h-3zM1802 161h7v1.2h-7zM1810 161h3v1.2h-3zM1814 161h10v1.2h-10zM1825 161h11v1.2h-11zM1806 169h4v1.2h-4zM1811 169h6v1.2h-6zM1818 169h3v1.2h-3zM1822 169h3v1.2h-3zM1826 169h4v1.2h-4zM1831 169h3v1.2h-3zM1835 169h8v1.2h-8zM1791 171h3v1.2h-3zM1795 171h6v1.2h-6zM1802 171h3v1.2h-3zM1806 171h5v1.2h-5zM1812 171h2v1.2h-2zM1815 171h3v1.2h-3zM1819 171h6v1.2h-6zM1826 171h11v1.2h-11zM1811 175h5v1.2h-5zM1817 175h5v1.2h-5zM1810 177h7v1.2h-7zM1818 177h6v1.2h-6zM1825 177h3v1.2h-3zM1829 177h2v1.2h-2zM1832 177h7v1.2h-7zM1804 181h4v1.2h-4zM1805 183h5v1.2h-5zM1811 183h8v1.2h-8zM1820 183h4v1.2h-4zM1825 183h3v1.2h-3zM1829 183h6v1.2h-6zM1836 183h3v1.2h-3zM1840 183h10v1.2h-10zM1851 183h1v1.2h-1zM1853 183h12v1.2h-12zM1806 189h5v1.2h-5zM1812 189h5v1.2h-5zM1818 189h3v1.2h-3zM1822 189h1v1.2h-1zM1824 189h3v1.2h-3zM1828 189h2v1.2h-2zM1831 189h3v1.2h-3zM1835 189h6v1.2h-6zM1811 197h3v1.2h-3zM1815 197h5v1.2h-5zM1821 197h5v1.2h-5zM1827 197h1v1.2h-1zM1829 197h8v1.2h-8zM1791 199h3v1.2h-3zM1795 199h5v1.2h-5zM1801 199h5v1.2h-5zM1807 199h3v1.2h-3zM1811 199h6v1.2h-6zM1815 203h5v1.2h-5zM1821 203h5v1.2h-5zM1815 205h6v1.2h-6zM1822 205h6v1.2h-6zM1829 205h3v1.2h-3zM1833 205h2v1.2h-2zM1836 205h7v1.2h-7zM1808 209h4v1.2h-4zM1810 211h3v1.2h-3zM1814 211h5v1.2h-5zM1820 211h3v1.2h-3zM1824 211h7v1.2h-7zM1832 211h6v1.2h-6zM1839 211h5v1.2h-5zM1845 211h7v1.2h-7zM1815 219h3v1.2h-3zM1819 219h4v1.2h-4zM1824 219h5v1.2h-5zM1830 219h8v1.2h-8zM1839 219h5v1.2h-5zM1791 221h3v1.2h-3zM1795 221h3v1.2h-3zM1799 221h2v1.2h-2zM1802 221h5v1.2h-5zM1808 221h1v1.2h-1zM1810 221h7v1.2h-7zM1819 225h5v1.2h-5zM1825 225h5v1.2h-5zM1819 227h6v1.2h-6zM1826 227h6v1.2h-6zM1833 227h3v1.2h-3zM1837 227h2v1.2h-2zM1840 227h7v1.2h-7zM1812 231h4v1.2h-4zM1814 233h3v1.2h-3zM1818 233h6v1.2h-6zM1825 233h3v1.2h-3zM1829 233h5v1.2h-5zM1835 233h6v1.2h-6zM1842 233h4v1.2h-4zM1847 233h4v1.2h-4zM1852 233h3v1.2h-3zM1856 233h4v1.2h-4zM1861 233h8v1.2h-8zM1819 241h3v1.2h-3zM1823 241h4v1.2h-4zM1828 241h4v1.2h-4zM1833 241h4v1.2h-4zM1838 241h6v1.2h-6zM1845 241h11v1.2h-11zM1791 243h3v1.2h-3zM1795 243h4v1.2h-4zM1800 243h1v1.2h-1zM1802 243h2v1.2h-2zM1805 243h6v1.2h-6zM1812 243h5v1.2h-5zM1818 243h7v1.2h-7zM1826 243h12v1.2h-12zM1823 247h5v1.2h-5zM1829 247h5v1.2h-5zM1823 249h6v1.2h-6zM1830 249h6v1.2h-6zM1837 249h3v1.2h-3zM1841 249h2v1.2h-2zM1844 249h7v1.2h-7zM1816 253h4v1.2h-4zM1818 255h6v1.2h-6zM1825 255h5v1.2h-5zM1831 255h6v1.2h-6zM1838 255h1v1.2h-1zM1840 255h5v1.2h-5zM1846 255h6v1.2h-6zM1853 255h11v1.2h-11zM1823 263h3v1.2h-3zM1827 263h4v1.2h-4zM1832 263h1v1.2h-1zM1834 263h4v1.2h-4zM1839 263h5v1.2h-5zM1845 263h5v1.2h-5zM1851 263h1v1.2h-1zM1853 263h6v1.2h-6zM1791 265h3v1.2h-3zM1795 265h5v1.2h-5zM1801 265h4v1.2h-4zM1806 265h3v1.2h-3zM1810 265h6v1.2h-6zM1817 265h3v1.2h-3zM1821 265h8v1.2h-8zM1827 269h5v1.2h-5zM1833 269h5v1.2h-5zM1827 271h6v1.2h-6zM1834 271h6v1.2h-6zM1841 271h3v1.2h-3zM1845 271h2v1.2h-2zM1848 271h7v1.2h-7zM1820 275h4v1.2h-4zM1822 277h7v1.2h-7zM1830 277h2v1.2h-2zM1833 277h6v1.2h-6zM1840 277h3v1.2h-3zM1844 277h3v1.2h-3zM1848 277h4v1.2h-4zM1853 277h7v1.2h-7zM1822 289h5v1.2h-5zM1828 289h5v1.2h-5zM1834 289h6v1.2h-6zM1841 289h4v1.2h-4zM1846 289h7v1.2h-7zM1854 289h1v1.2h-1zM1791 291h5v1.2h-5zM1797 291h5v1.2h-5zM1803 291h5v1.2h-5zM1809 291h4v1.2h-4zM1814 291h5v1.2h-5zM1820 291h8v1.2h-8zM1818 305h5v1.2h-5zM1824 305h6v1.2h-6zM1831 305h3v1.2h-3zM1835 305h7v1.2h-7zM1843 305h5v1.2h-5zM1849 305h4v1.2h-4zM1854 305h1v1.2h-1zM1791 307h5v1.2h-5zM1797 307h7v1.2h-7zM1805 307h7v1.2h-7zM1813 307h7v1.2h-7zM1814 321h8v1.2h-8zM1823 321h5v1.2h-5zM1829 321h4v1.2h-4zM1834 321h4v1.2h-4zM1839 321h5v1.2h-5zM1845 321h5v1.2h-5zM1851 321h3v1.2h-3zM1855 321h1v1.2h-1zM1791 323h6v1.2h-6zM1798 323h4v1.2h-4zM1803 323h6v1.2h-6zM1810 323h3v1.2h-3zM1814 323h7v1.2h-7zM1810 337h5v1.2h-5zM1816 337h5v1.2h-5zM1822 337h5v1.2h-5zM1828 337h5v1.2h-5zM1834 337h2v1.2h-2zM1837 337h5v1.2h-5zM1843 337h5v1.2h-5zM1849 337h3v1.2h-3zM1853 337h1v1.2h-1zM1791 339h1v1.2h-1zM1793 339h3v1.2h-3zM1797 339h5v1.2h-5zM1803 339h10v1.2h-10zM1802 351h8v1.2h-8zM1811 351h3v1.2h-3zM1815 351h2v1.2h-2zM1818 351h4v1.2h-4zM1823 351h5v1.2h-5zM1829 351h6v1.2h-6zM1807 359h3v1.2h-3zM1811 359h1v1.2h-1zM1813 359h3v1.2h-3zM1817 359h3v1.2h-3zM1821 359h2v1.2h-2zM1824 359h3v1.2h-3zM1828 359h5v1.2h-5zM1834 359h9v1.2h-9zM1811 363h5v1.2h-5zM1817 363h5v1.2h-5zM1811 365h6v1.2h-6zM1818 365h6v1.2h-6zM1825 365h3v1.2h-3zM1829 365h2v1.2h-2zM1832 365h7v1.2h-7zM1804 369h4v1.2h-4zM1806 371h3v1.2h-3zM1810 371h5v1.2h-5zM1816 371h2v1.2h-2zM1819 371h2v1.2h-2zM1822 371h6v1.2h-6zM1829 371h4v1.2h-4zM1834 371h5v1.2h-5zM1840 371h8v1.2h-8zM1811 379h3v1.2h-3zM1815 379h8v1.2h-8zM1824 379h5v1.2h-5zM1830 379h5v1.2h-5zM1836 379h10v1.2h-10zM1791 381h3v1.2h-3zM1795 381h3v1.2h-3zM1799 381h4v1.2h-4zM1804 381h3v1.2h-3zM1808 381h9v1.2h-9zM1815 385h5v1.2h-5zM1821 385h5v1.2h-5zM1815 387h6v1.2h-6zM1822 387h6v1.2h-6zM1829 387h3v1.2h-3zM1833 387h2v1.2h-2zM1836 387h7v1.2h-7zM1808 391h4v1.2h-4zM1810 393h3v1.2h-3zM1814 393h4v1.2h-4zM1819 393h4v1.2h-4zM1824 393h4v1.2h-4zM1829 393h5v1.2h-5zM1835 393h4v1.2h-4zM1840 393h3v1.2h-3zM1844 393h7v1.2h-7zM1852 393h6v1.2h-6zM1859 393h10v1.2h-10zM1815 401h3v1.2h-3zM1819 401h7v1.2h-7zM1827 401h5v1.2h-5zM1833 401h5v1.2h-5zM1839 401h5v1.2h-5zM1845 401h7v1.2h-7zM1853 401h2v1.2h-2zM1856 401h3v1.2h-3zM1860 401h5v1.2h-5zM1866 401h8v1.2h-8zM1819 405h5v1.2h-5zM1825 405h5v1.2h-5zM1805 423h5v1.2h-5zM1811 423h5v1.2h-5zM1817 423h4v1.2h-4zM1802 427h7v1.2h-7zM1810 427h2v1.2h-2zM1813 427h3v1.2h-3zM1817 427h4v1.2h-4zM1822 427h5v1.2h-5zM1802 433h4v1.2h-4zM1807 433h5v1.2h-5zM1813 433h5v1.2h-5zM1819 433h3v1.2h-3zM1823 433h3v1.2h-3zM1827 433h5v1.2h-5zM1833 433h3v1.2h-3zM1837 433h4v1.2h-4zM1842 433h6v1.2h-6zM1849 433h8v1.2h-8zM1807 441h3v1.2h-3zM1811 441h3v1.2h-3zM1815 441h5v1.2h-5zM1821 441h4v1.2h-4zM1826 441h3v1.2h-3zM1830 441h6v1.2h-6zM1837 441h2v1.2h-2zM1840 441h3v1.2h-3zM1844 441h4v1.2h-4zM1849 441h8v1.2h-8zM1811 445h5v1.2h-5zM1817 445h5v1.2h-5zM1811 447h6v1.2h-6zM1818 447h6v1.2h-6zM1825 447h3v1.2h-3zM1829 447h2v1.2h-2zM1832 447h7v1.2h-7zM1804 451h4v1.2h-4zM1806 453h6v1.2h-6zM1813 453h4v1.2h-4zM1818 453h3v1.2h-3zM1822 453h5v1.2h-5zM1828 453h4v1.2h-4zM1833 453h6v1.2h-6zM1840 453h3v1.2h-3zM1844 453h5v1.2h-5zM1850 453h11v1.2h-11zM1811 461h3v1.2h-3zM1815 461h8v1.2h-8zM1824 461h5v1.2h-5zM1830 461h5v1.2h-5zM1836 461h2v1.2h-2zM1839 461h8v1.2h-8zM1791 463h3v1.2h-3zM1795 463h6v1.2h-6zM1802 463h4v1.2h-4zM1807 463h4v1.2h-4zM1812 463h9v1.2h-9zM1815 467h5v1.2h-5zM1821 467h5v1.2h-5zM1815 469h6v1.2h-6zM1822 469h6v1.2h-6zM1829 469h3v1.2h-3zM1833 469h2v1.2h-2zM1836 469h7v1.2h-7zM1808 473h4v1.2h-4zM1810 475h2v1.2h-2zM1813 475h5v1.2h-5zM1819 475h3v1.2h-3zM1823 475h5v1.2h-5zM1829 475h5v1.2h-5zM1835 475h5v1.2h-5zM1841 475h6v1.2h-6zM1848 475h2v1.2h-2zM1851 475h9v1.2h-9zM1815 483h3v1.2h-3zM1819 483h5v1.2h-5zM1825 483h6v1.2h-6zM1832 483h6v1.2h-6zM1839 483h2v1.2h-2zM1842 483h3v1.2h-3zM1846 483h6v1.2h-6zM1853 483h9v1.2h-9zM1819 487h5v1.2h-5zM1825 487h5v1.2h-5zM1819 489h6v1.2h-6zM1826 489h6v1.2h-6zM1833 489h3v1.2h-3zM1837 489h2v1.2h-2zM1840 489h7v1.2h-7zM1812 493h4v1.2h-4zM1814 495h5v1.2h-5zM1820 495h6v1.2h-6zM1827 495h3v1.2h-3zM1831 495h5v1.2h-5zM1837 495h6v1.2h-6zM1844 495h5v1.2h-5zM1850 495h4v1.2h-4zM1855 495h8v1.2h-8zM1819 503h3v1.2h-3zM1823 503h5v1.2h-5zM1829 503h4v1.2h-4zM1834 503h5v1.2h-5zM1840 503h2v1.2h-2zM1843 503h2v1.2h-2zM1846 503h3v1.2h-3zM1850 503h5v1.2h-5zM1856 503h9v1.2h-9zM1823 507h5v1.2h-5zM1829 507h5v1.2h-5zM1823 509h6v1.2h-6zM1830 509h6v1.2h-6zM1837 509h3v1.2h-3zM1841 509h2v1.2h-2zM1844 509h7v1.2h-7zM1816 513h4v1.2h-4zM1818 515h1v1.2h-1zM1820 515h5v1.2h-5zM1826 515h5v1.2h-5zM1832 515h1v1.2h-1zM1834 515h3v1.2h-3zM1838 515h4v1.2h-4zM1843 515h2v1.2h-2zM1846 515h8v1.2h-8zM1823 523h3v1.2h-3zM1827 523h5v1.2h-5zM1833 523h5v1.2h-5zM1839 523h4v1.2h-4zM1844 523h4v1.2h-4zM1849 523h7v1.2h-7zM1857 523h2v1.2h-2zM1860 523h3v1.2h-3zM1864 523h2v1.2h-2zM1867 523h9v1.2h-9zM1827 527h5v1.2h-5zM1833 527h5v1.2h-5zM1827 529h6v1.2h-6zM1834 529h6v1.2h-6zM1841 529h3v1.2h-3zM1845 529h2v1.2h-2zM1848 529h7v1.2h-7zM1820 533h4v1.2h-4zM1822 535h7v1.2h-7zM1830 535h7v1.2h-7zM1838 535h7v1.2h-7zM1846 535h5v1.2h-5zM1852 535h6v1.2h-6zM1859 535h5v1.2h-5zM1865 535h8v1.2h-8zM1874 535h5v1.2h-5zM1880 535h8v1.2h-8zM1827 543h3v1.2h-3zM1831 543h3v1.2h-3zM1835 543h8v1.2h-8zM1844 543h5v1.2h-5zM1850 543h4v1.2h-4zM1855 543h5v1.2h-5zM1861 543h6v1.2h-6zM1791 545h3v1.2h-3zM1795 545h8v1.2h-8zM1804 545h4v1.2h-4zM1809 545h4v1.2h-4zM1814 545h6v1.2h-6zM1821 545h1v1.2h-1zM1823 545h2v1.2h-2zM1826 545h11v1.2h-11zM1831 549h5v1.2h-5zM1837 549h5v1.2h-5zM1831 551h6v1.2h-6zM1838 551h6v1.2h-6zM1845 551h3v1.2h-3zM1849 551h2v1.2h-2zM1852 551h7v1.2h-7zM1824 555h4v1.2h-4zM1826 557h4v1.2h-4zM1831 557h5v1.2h-5zM1837 557h5v1.2h-5zM1843 557h6v1.2h-6zM1850 557h11v1.2h-11zM1826 569h4v1.2h-4zM1831 569h5v1.2h-5zM1837 569h5v1.2h-5zM1843 569h5v1.2h-5zM1849 569h5v1.2h-5zM1855 569h3v1.2h-3zM1859 569h1v1.2h-1zM1791 571h6v1.2h-6zM1798 571h4v1.2h-4zM1803 571h5v1.2h-5zM1809 571h3v1.2h-3zM1813 571h8v1.2h-8zM1822 571h8v1.2h-8zM1822 585h5v1.2h-5zM1828 585h3v1.2h-3zM1832 585h4v1.2h-4zM1837 585h5v1.2h-5zM1843 585h1v1.2h-1zM1791 587h7v1.2h-7zM1799 587h1v1.2h-1zM1801 587h8v1.2h-8zM1818 601h4v1.2h-4zM1823 601h4v1.2h-4zM1828 601h8v1.2h-8zM1837 601h5v1.2h-5zM1843 601h1v1.2h-1zM1791 603h5v1.2h-5zM1797 603h4v1.2h-4zM1802 603h6v1.2h-6zM1809 603h4v1.2h-4zM1814 603h5v1.2h-5zM1820 603h5v1.2h-5zM1814 617h5v1.2h-5zM1820 617h3v1.2h-3zM1824 617h8v1.2h-8zM1833 617h5v1.2h-5zM1839 617h4v1.2h-4zM1844 617h1v1.2h-1zM1791 619h4v1.2h-4zM1796 619h3v1.2h-3zM1800 619h4v1.2h-4zM1805 619h5v1.2h-5zM1811 619h9v1.2h-9zM1810 633h5v1.2h-5zM1816 633h6v1.2h-6zM1823 633h3v1.2h-3zM1827 633h5v1.2h-5zM1833 633h6v1.2h-6zM1840 633h1v1.2h-1zM1791 635h3v1.2h-3zM1795 635h6v1.2h-6zM1802 635h8v1.2h-8zM1806 649h6v1.2h-6zM1813 649h5v1.2h-5zM1819 649h5v1.2h-5zM1825 649h5v1.2h-5zM1831 649h2v1.2h-2zM1834 649h1v1.2h-1zM1791 651h6v1.2h-6zM1798 651h3v1.2h-3zM1802 651h5v1.2h-5zM1808 651h6v1.2h-6zM1815 651h4v1.2h-4zM1820 651h6v1.2h-6zM1806 663h8v1.2h-8zM1815 663h5v1.2h-5zM1821 663h4v1.2h-4zM1826 663h5v1.2h-5zM1832 663h6v1.2h-6zM1839 663h3v1.2h-3zM1843 663h7v1.2h-7zM1811 671h3v1.2h-3zM1815 671h5v1.2h-5zM1821 671h7v1.2h-7zM1829 671h3v1.2h-3zM1833 671h4v1.2h-4zM1838 671h3v1.2h-3zM1842 671h9v1.2h-9zM1791 673h3v1.2h-3zM1795 673h5v1.2h-5zM1801 673h4v1.2h-4zM1806 673h6v1.2h-6zM1813 673h4v1.2h-4zM1818 673h8v1.2h-8zM1827 673h11v1.2h-11zM1815 677h5v1.2h-5zM1821 677h5v1.2h-5zM1815 679h6v1.2h-6zM1822 679h6v1.2h-6zM1829 679h3v1.2h-3zM1833 679h2v1.2h-2zM1836 679h7v1.2h-7zM1808 683h4v1.2h-4zM1810 685h5v1.2h-5zM1816 685h4v1.2h-4zM1821 685h5v1.2h-5zM1827 685h3v1.2h-3zM1831 685h8v1.2h-8zM1840 685h5v1.2h-5zM1846 685h6v1.2h-6zM1853 685h8v1.2h-8zM1815 693h3v1.2h-3zM1819 693h3v1.2h-3zM1823 693h6v1.2h-6zM1830 693h8v1.2h-8zM1839 693h4v1.2h-4zM1844 693h8v1.2h-8zM1853 693h2v1.2h-2zM1856 693h3v1.2h-3zM1860 693h3v1.2h-3zM1864 693h8v1.2h-8zM1819 697h5v1.2h-5zM1825 697h5v1.2h-5zM1819 699h6v1.2h-6zM1826 699h6v1.2h-6zM1833 699h3v1.2h-3zM1837 699h2v1.2h-2zM1840 699h7v1.2h-7zM1812 703h4v1.2h-4zM1814 705h5v1.2h-5zM1820 705h6v1.2h-6zM1827 705h5v1.2h-5zM1833 705h5v1.2h-5zM1839 705h6v1.2h-6zM1846 705h4v1.2h-4zM1851 705h4v1.2h-4zM1856 705h5v1.2h-5zM1862 705h7v1.2h-7zM1819 713h3v1.2h-3zM1823 713h5v1.2h-5zM1829 713h3v1.2h-3zM1833 713h4v1.2h-4zM1838 713h7v1.2h-7zM1805 731h5v1.2h-5zM1811 731h5v1.2h-5zM1817 731h4v1.2h-4zM1802 735h7v1.2h-7zM1810 735h2v1.2h-2zM1813 735h3v1.2h-3zM1817 735h4v1.2h-4zM1822 735h7v1.2h-7zM1802 741h6v1.2h-6zM1809 741h5v1.2h-5zM1815 741h5v1.2h-5zM1821 741h3v1.2h-3zM1825 741h3v1.2h-3zM1829 741h6v1.2h-6zM1807 749h3v1.2h-3zM1811 749h4v1.2h-4zM1816 749h5v1.2h-5zM1822 749h3v1.2h-3zM1826 749h4v1.2h-4zM1831 749h2v1.2h-2zM1834 749h3v1.2h-3zM1838 749h6v1.2h-6zM1845 749h9v1.2h-9zM1811 753h5v1.2h-5zM1817 753h5v1.2h-5zM1811 755h6v1.2h-6zM1818 755h6v1.2h-6zM1825 755h3v1.2h-3zM1829 755h2v1.2h-2zM1832 755h7v1.2h-7zM1804 759h4v1.2h-4zM1806 761h3v1.2h-3zM1810 761h7v1.2h-7zM1818 761h6v1.2h-6zM1825 761h6v1.2h-6zM1832 761h5v1.2h-5zM1838 761h6v1.2h-6zM1811 769h3v1.2h-3zM1815 769h5v1.2h-5zM1821 769h5v1.2h-5zM1827 769h4v1.2h-4zM1832 769h5v1.2h-5zM1838 769h5v1.2h-5zM1844 769h6v1.2h-6zM1851 769h6v1.2h-6zM1791 771h3v1.2h-3zM1795 771h2v1.2h-2zM1798 771h8v1.2h-8zM1807 771h4v1.2h-4zM1812 771h6v1.2h-6zM1819 771h8v1.2h-8zM1828 771h9v1.2h-9zM1815 775h5v1.2h-5zM1821 775h5v1.2h-5zM1815 777h6v1.2h-6zM1822 777h6v1.2h-6zM1829 777h3v1.2h-3zM1833 777h2v1.2h-2zM1836 777h7v1.2h-7zM1808 781h4v1.2h-4zM1810 783h5v1.2h-5zM1816 783h4v1.2h-4zM1821 783h4v1.2h-4zM1826 783h5v1.2h-5zM1832 783h3v1.2h-3zM1836 783h4v1.2h-4zM1815 791h3v1.2h-3zM1819 791h3v1.2h-3zM1823 791h5v1.2h-5zM1829 791h5v1.2h-5zM1835 791h6v1.2h-6zM1791 793h3v1.2h-3zM1795 793h2v1.2h-2zM1798 793h3v1.2h-3zM1802 793h4v1.2h-4zM1807 793h5v1.2h-5zM1813 793h5v1.2h-5zM1819 793h9v1.2h-9zM1819 797h5v1.2h-5zM1825 797h5v1.2h-5zM1819 799h6v1.2h-6zM1826 799h6v1.2h-6zM1833 799h3v1.2h-3zM1837 799h2v1.2h-2zM1840 799h7v1.2h-7zM1812 803h4v1.2h-4zM1814 805h6v1.2h-6zM1821 805h6v1.2h-6zM1828 805h5v1.2h-5zM1834 805h3v1.2h-3zM1838 805h5v1.2h-5zM1844 805h3v1.2h-3zM1848 805h5v1.2h-5zM1854 805h5v1.2h-5zM1860 805h8v1.2h-8zM1819 813h3v1.2h-3zM1823 813h5v1.2h-5zM1829 813h5v1.2h-5zM1835 813h4v1.2h-4zM1840 813h2v1.2h-2zM1843 813h3v1.2h-3zM1847 813h4v1.2h-4zM1852 813h10v1.2h-10zM1823 817h5v1.2h-5zM1829 817h5v1.2h-5zM1823 819h6v1.2h-6zM1830 819h6v1.2h-6zM1837 819h3v1.2h-3zM1841 819h2v1.2h-2zM1844 819h7v1.2h-7zM1816 823h4v1.2h-4zM1818 825h5v1.2h-5zM1824 825h4v1.2h-4zM1829 825h7v1.2h-7zM1837 825h5v1.2h-5zM1843 825h5v1.2h-5zM1849 825h11v1.2h-11zM1823 833h3v1.2h-3zM1827 833h5v1.2h-5zM1833 833h5v1.2h-5zM1839 833h4v1.2h-4zM1844 833h5v1.2h-5zM1850 833h5v1.2h-5zM1856 833h8v1.2h-8zM1791 835h3v1.2h-3zM1795 835h7v1.2h-7zM1803 835h7v1.2h-7zM1811 835h1v1.2h-1zM1813 835h7v1.2h-7zM1827 839h5v1.2h-5zM1833 839h5v1.2h-5zM1827 841h6v1.2h-6zM1834 841h6v1.2h-6zM1841 841h3v1.2h-3zM1845 841h2v1.2h-2zM1848 841h7v1.2h-7zM1820 845h4v1.2h-4zM1822 847h6v1.2h-6zM1829 847h5v1.2h-5zM1835 847h7v1.2h-7zM1843 847h5v1.2h-5zM1849 847h8v1.2h-8zM1858 847h5v1.2h-5zM1864 847h5v1.2h-5zM1870 847h4v1.2h-4zM1875 847h5v1.2h-5zM1881 847h8v1.2h-8zM1827 855h3v1.2h-3zM1831 855h5v1.2h-5zM1837 855h4v1.2h-4zM1842 855h6v1.2h-6zM1849 855h5v1.2h-5zM1855 855h3v1.2h-3zM1859 855h8v1.2h-8zM1791 857h3v1.2h-3zM1795 857h3v1.2h-3zM1799 857h5v1.2h-5zM1805 857h3v1.2h-3zM1809 857h5v1.2h-5zM1815 857h8v1.2h-8zM1831 861h5v1.2h-5zM1837 861h5v1.2h-5zM1831 863h6v1.2h-6zM1838 863h6v1.2h-6zM1845 863h3v1.2h-3zM1849 863h2v1.2h-2zM1852 863h7v1.2h-7zM1824 867h4v1.2h-4zM1826 869h3v1.2h-3zM1830 869h5v1.2h-5zM1836 869h8v1.2h-8zM1845 869h3v1.2h-3zM1849 869h6v1.2h-6zM1856 869h8v1.2h-8zM1826 881h3v1.2h-3zM1830 881h4v1.2h-4zM1835 881h6v1.2h-6zM1842 881h4v1.2h-4zM1847 881h3v1.2h-3zM1851 881h4v1.2h-4zM1856 881h5v1.2h-5zM1862 881h5v1.2h-5zM1868 881h1v1.2h-1zM1791 883h5v1.2h-5zM1797 883h5v1.2h-5zM1803 883h5v1.2h-5zM1809 883h4v1.2h-4zM1814 883h3v1.2h-3zM1818 883h7v1.2h-7zM1822 897h5v1.2h-5zM1828 897h5v1.2h-5zM1834 897h6v1.2h-6zM1841 897h4v1.2h-4zM1846 897h1v1.2h-1zM1791 899h5v1.2h-5zM1797 899h4v1.2h-4zM1802 899h7v1.2h-7zM1818 913h5v1.2h-5zM1824 913h2v1.2h-2zM1827 913h7v1.2h-7zM1835 913h5v1.2h-5zM1841 913h5v1.2h-5zM1847 913h4v1.2h-4zM1852 913h2v1.2h-2zM1855 913h1v1.2h-1zM1791 915h4v1.2h-4zM1796 915h5v1.2h-5zM1802 915h6v1.2h-6zM1809 915h4v1.2h-4zM1814 915h4v1.2h-4zM1819 915h10v1.2h-10zM1814 929h6v1.2h-6zM1821 929h4v1.2h-4zM1826 929h4v1.2h-4zM1831 929h5v1.2h-5zM1837 929h4v1.2h-4zM1842 929h5v1.2h-5zM1848 929h2v1.2h-2zM1851 929h2v1.2h-2zM1854 929h1v1.2h-1zM1791 931h4v1.2h-4zM1796 931h4v1.2h-4zM1801 931h8v1.2h-8zM1810 945h5v1.2h-5zM1816 945h7v1.2h-7zM1824 945h4v1.2h-4zM1829 945h4v1.2h-4zM1834 945h3v1.2h-3zM1838 945h4v1.2h-4zM1843 945h4v1.2h-4zM1848 945h1v1.2h-1zM1791 947h6v1.2h-6zM1798 947h5v1.2h-5zM1804 947h5v1.2h-5zM1810 947h4v1.2h-4zM1815 947h8v1.2h-8zM1806 961h5v1.2h-5zM1812 961h3v1.2h-3zM1816 961h5v1.2h-5zM1822 961h4v1.2h-4zM1827 961h3v1.2h-3zM1831 961h3v1.2h-3zM1835 961h5v1.2h-5zM1841 961h6v1.2h-6zM1848 961h1v1.2h-1zM1791 963h4v1.2h-4zM1796 963h5v1.2h-5zM1802 963h7v1.2h-7zM1810 963h5v1.2h-5zM1816 963h3v1.2h-3zM1820 963h10v1.2h-10zM1806 975h6v1.2h-6zM1813 975h8v1.2h-8zM1822 975h5v1.2h-5zM1828 975h3v1.2h-3zM1832 975h5v1.2h-5zM1838 975h5v1.2h-5zM1844 975h4v1.2h-4zM1849 975h4v1.2h-4zM1854 975h9v1.2h-9zM1811 983h3v1.2h-3zM1815 983h4v1.2h-4zM1820 983h5v1.2h-5zM1826 983h7v1.2h-7zM1834 983h4v1.2h-4zM1839 983h10v1.2h-10zM1791 985h3v1.2h-3zM1795 985h4v1.2h-4zM1800 985h2v1.2h-2zM1803 985h6v1.2h-6zM1810 985h8v1.2h-8zM1819 985h7v1.2h-7zM1827 985h10v1.2h-10z" fill="#ce9178" fill-opacity="0.33"/><path d="M1795 127h1v1.2h-1zM1797 127h5v1.2h-5zM1803 127h5v1.2h-5zM1795 135h1v1.2h-1zM1797 135h5v1.2h-5zM1803 135h5v1.2h-5zM1795 139h1v1.2h-1zM1797 139h8v1.2h-8zM1806 139h2v1.2h-2zM1809 139h4v1.2h-4zM1814 139h3v1.2h-3zM1818 139h6v1.2h-6zM1825 139h2v1.2h-2zM1828 139h6v1.2h-6zM1795 143h1v1.2h-1zM1797 143h8v1.2h-8zM1806 143h3v1.2h-3zM1810 143h6v1.2h-6zM1817 143h6v1.2h-6zM1795 149h1v1.2h-1zM1797 149h2v1.2h-2zM1800 149h9v1.2h-9zM1810 149h2v1.2h-2zM1813 149h5v1.2h-5zM1819 149h3v1.2h-3zM1823 149h6v1.2h-6zM1830 149h2v1.2h-2zM1833 149h3v1.2h-3zM1837 149h6v1.2h-6zM1795 163h1v1.2h-1zM1797 163h5v1.2h-5zM1803 163h5v1.2h-5zM1795 167h1v1.2h-1zM1797 167h8v1.2h-8zM1806 167h2v1.2h-2zM1809 167h4v1.2h-4zM1814 167h3v1.2h-3zM1818 167h6v1.2h-6zM1825 167h2v1.2h-2zM1828 167h6v1.2h-6zM1795 173h1v1.2h-1zM1797 173h8v1.2h-8zM1806 173h3v1.2h-3zM1810 173h6v1.2h-6zM1817 173h6v1.2h-6zM1795 179h1v1.2h-1zM1797 179h2v1.2h-2zM1800 179h9v1.2h-9zM1810 179h2v1.2h-2zM1813 179h5v1.2h-5zM1819 179h3v1.2h-3zM1823 179h6v1.2h-6zM1830 179h2v1.2h-2zM1833 179h3v1.2h-3zM1837 179h6v1.2h-6zM1799 185h1v1.2h-1zM1801 185h5v1.2h-5zM1807 185h5v1.2h-5zM1799 191h1v1.2h-1zM1801 191h5v1.2h-5zM1807 191h5v1.2h-5zM1799 195h1v1.2h-1zM1801 195h8v1.2h-8zM1810 195h2v1.2h-2zM1813 195h4v1.2h-4zM1818 195h3v1.2h-3zM1822 195h6v1.2h-6zM1829 195h2v1.2h-2zM1832 195h6v1.2h-6zM1799 201h1v1.2h-1zM1801 201h8v1.2h-8zM1810 201h3v1.2h-3zM1814 201h6v1.2h-6zM1821 201h6v1.2h-6zM1799 207h1v1.2h-1zM1801 207h2v1.2h-2zM1804 207h9v1.2h-9zM1814 207h2v1.2h-2zM1817 207h5v1.2h-5zM1823 207h3v1.2h-3zM1827 207h6v1.2h-6zM1834 207h2v1.2h-2zM1837 207h3v1.2h-3zM1841 207h6v1.2h-6zM1803 213h1v1.2h-1zM1805 213h5v1.2h-5zM1811 213h5v1.2h-5zM1803 217h1v1.2h-1zM1805 217h8v1.2h-8zM1814 217h2v1.2h-2zM1817 217h4v1.2h-4zM1822 217h3v1.2h-3zM1826 217h6v1.2h-6zM1833 217h2v1.2h-2zM1836 217h6v1.2h-6zM1803 223h1v1.2h-1zM1805 223h8v1.2h-8zM1814 223h3v1.2h-3zM1818 223h6v1.2h-6zM1825 223h6v1.2h-6zM1803 229h1v1.2h-1zM1805 229h2v1.2h-2zM1808 229h9v1.2h-9zM1818 229h2v1.2h-2zM1821 229h5v1.2h-5zM1827 229h3v1.2h-3zM1831 229h6v1.2h-6zM1838 229h2v1.2h-2zM1841 229h3v1.2h-3zM1845 229h6v1.2h-6zM1807 235h1v1.2h-1zM1809 235h5v1.2h-5zM1815 235h5v1.2h-5zM1807 239h1v1.2h-1zM1809 239h8v1.2h-8zM1818 239h2v1.2h-2zM1821 239h4v1.2h-4zM1826 239h3v1.2h-3zM1830 239h6v1.2h-6zM1837 239h2v1.2h-2zM1840 239h6v1.2h-6zM1807 245h1v1.2h-1zM1809 245h8v1.2h-8zM1818 245h3v1.2h-3zM1822 245h6v1.2h-6zM1829 245h6v1.2h-6zM1807 251h1v1.2h-1zM1809 251h2v1.2h-2zM1812 251h9v1.2h-9zM1822 251h2v1.2h-2zM1825 251h5v1.2h-5zM1831 251h3v1.2h-3zM1835 251h6v1.2h-6zM1842 251h2v1.2h-2zM1845 251h3v1.2h-3zM1849 251h6v1.2h-6zM1811 257h1v1.2h-1zM1813 257h5v1.2h-5zM1819 257h5v1.2h-5zM1811 261h1v1.2h-1zM1813 261h8v1.2h-8zM1822 261h2v1.2h-2zM1825 261h4v1.2h-4zM1830 261h3v1.2h-3zM1834 261h6v1.2h-6zM1841 261h2v1.2h-2zM1844 261h6v1.2h-6zM1811 267h1v1.2h-1zM1813 267h8v1.2h-8zM1822 267h3v1.2h-3zM1826 267h6v1.2h-6zM1833 267h6v1.2h-6zM1811 273h1v1.2h-1zM1813 273h2v1.2h-2zM1816 273h9v1.2h-9zM1826 273h2v1.2h-2zM1829 273h5v1.2h-5zM1835 273h3v1.2h-3zM1839 273h6v1.2h-6zM1846 273h2v1.2h-2zM1849 273h3v1.2h-3zM1853 273h6v1.2h-6zM1815 279h1v1.2h-1zM1817 279h5v1.2h-5zM1823 279h5v1.2h-5zM1815 293h1v1.2h-1zM1817 293h5v1.2h-5zM1823 293h5v1.2h-5zM1811 309h1v1.2h-1zM1813 309h5v1.2h-5zM1819 309h5v1.2h-5zM1807 325h1v1.2h-1zM1809 325h5v1.2h-5zM1815 325h5v1.2h-5zM1803 341h1v1.2h-1zM1805 341h5v1.2h-5zM1811 341h5v1.2h-5zM1795 353h1v1.2h-1zM1797 353h5v1.2h-5zM1803 353h5v1.2h-5zM1795 357h1v1.2h-1zM1797 357h8v1.2h-8zM1806 357h2v1.2h-2zM1809 357h4v1.2h-4zM1814 357h3v1.2h-3zM1818 357h6v1.2h-6zM1825 357h2v1.2h-2zM1828 357h6v1.2h-6zM1795 361h1v1.2h-1zM1797 361h8v1.2h-8zM1806 361h3v1.2h-3zM1810 361h6v1.2h-6zM1817 361h6v1.2h-6zM1795 367h1v1.2h-1zM1797 367h2v1.2h-2zM1800 367h9v1.2h-9zM1810 367h2v1.2h-2zM1813 367h5v1.2h-5zM1819 367h3v1.2h-3zM1823 367h6v1.2h-6zM1830 367h2v1.2h-2zM1833 367h3v1.2h-3zM1837 367h6v1.2h-6zM1799 373h1v1.2h-1zM1801 373h5v1.2h-5zM1807 373h5v1.2h-5zM1799 377h1v1.2h-1zM1801 377h8v1.2h-8zM1810 377h2v1.2h-2zM1813 377h4v1.2h-4zM1818 377h3v1.2h-3zM1822 377h6v1.2h-6zM1829 377h2v1.2h-2zM1832 377h6v1.2h-6zM1799 383h1v1.2h-1zM1801 383h8v1.2h-8zM1810 383h3v1.2h-3zM1814 383h6v1.2h-6zM1821 383h6v1.2h-6zM1799 389h1v1.2h-1zM1801 389h2v1.2h-2zM1804 389h9v1.2h-9zM1814 389h2v1.2h-2zM1817 389h5v1.2h-5zM1823 389h3v1.2h-3zM1827 389h6v1.2h-6zM1834 389h2v1.2h-2zM1837 389h3v1.2h-3zM1841 389h6v1.2h-6zM1803 395h1v1.2h-1zM1805 395h5v1.2h-5zM1811 395h5v1.2h-5zM1803 399h1v1.2h-1zM1805 399h8v1.2h-8zM1814 399h2v1.2h-2zM1817 399h4v1.2h-4zM1822 399h3v1.2h-3zM1826 399h6v1.2h-6zM1833 399h2v1.2h-2zM1836 399h6v1.2h-6zM1803 403h1v1.2h-1zM1805 403h8v1.2h-8zM1814 403h3v1.2h-3zM1818 403h6v1.2h-6zM1825 403h6v1.2h-6zM1791 411h1v1.2h-1zM1793 411h8v1.2h-8zM1802 411h2v1.2h-2zM1805 411h5v1.2h-5zM1811 411h5v1.2h-5zM1817 411h4v1.2h-4zM1795 415h1v1.2h-1zM1797 415h8v1.2h-8zM1806 415h2v1.2h-2zM1809 415h6v1.2h-6zM1816 415h5v1.2h-5zM1795 429h1v1.2h-1zM1797 429h5v1.2h-5zM1803 429h5v1.2h-5zM1795 435h1v1.2h-1zM1797 435h5v1.2h-5zM1803 435h5v1.2h-5zM1795 439h1v1.2h-1zM1797 439h8v1.2h-8zM1806 439h2v1.2h-2zM1809 439h4v1.2h-4zM1814 439h3v1.2h-3zM1818 439h6v1.2h-6zM1825 439h2v1.2h-2zM1828 439h6v1.2h-6zM1795 443h1v1.2h-1zM1797 443h8v1.2h-8zM1806 443h3v1.2h-3zM1810 443h6v1.2h-6zM1817 443h6v1.2h-6zM1795 449h1v1.2h-1zM1797 449h2v1.2h-2zM1800 449h9v1.2h-9zM1810 449h2v1.2h-2zM1813 449h5v1.2h-5zM1819 449h3v1.2h-3zM1823 449h6v1.2h-6zM1830 449h2v1.2h-2zM1833 449h3v1.2h-3zM1837 449h6v1.2h-6zM1799 455h1v1.2h-1zM1801 455h5v1.2h-5zM1807 455h5v1.2h-5zM1799 459h1v1.2h-1zM1801 459h8v1.2h-8zM1810 459h2v1.2h-2zM1813 459h4v1.2h-4zM1818 459h3v1.2h-3zM1822 459h6v1.2h-6zM1829 459h2v1.2h-2zM1832 459h6v1.2h-6zM1799 465h1v1.2h-1zM1801 465h8v1.2h-8zM1810 465h3v1.2h-3zM1814 465h6v1.2h-6zM1821 465h6v1.2h-6zM1799 471h1v1.2h-1zM1801 471h2v1.2h-2zM1804 471h9v1.2h-9zM1814 471h2v1.2h-2zM1817 471h5v1.2h-5zM1823 471h3v1.2h-3zM1827 471h6v1.2h-6zM1834 471h2v1.2h-2zM1837 471h3v1.2h-3zM1841 471h6v1.2h-6zM1803 477h1v1.2h-1zM1805 477h5v1.2h-5zM1811 477h5v1.2h-5zM1803 481h1v1.2h-1zM1805 481h8v1.2h-8zM1814 481h2v1.2h-2zM1817 481h4v1.2h-4zM1822 481h3v1.2h-3zM1826 481h6v1.2h-6zM1833 481h2v1.2h-2zM1836 481h6v1.2h-6zM1803 485h1v1.2h-1zM1805 485h8v1.2h-8zM1814 485h3v1.2h-3zM1818 485h6v1.2h-6zM1825 485h6v1.2h-6zM1803 491h1v1.2h-1zM1805 491h2v1.2h-2zM1808 491h9v1.2h-9zM1818 491h2v1.2h-2zM1821 491h5v1.2h-5zM1827 491h3v1.2h-3zM1831 491h6v1.2h-6zM1838 491h2v1.2h-2zM1841 491h3v1.2h-3zM1845 491h6v1.2h-6zM1807 497h1v1.2h-1zM1809 497h5v1.2h-5zM1815 497h5v1.2h-5zM1807 501h1v1.2h-1zM1809 501h8v1.2h-8zM1818 501h2v1.2h-2zM1821 501h4v1.2h-4zM1826 501h3v1.2h-3zM1830 501h6v1.2h-6zM1837 501h2v1.2h-2zM1840 501h6v1.2h-6zM1807 505h1v1.2h-1zM1809 505h8v1.2h-8zM1818 505h3v1.2h-3zM1822 505h6v1.2h-6zM1829 505h6v1.2h-6zM1807 511h1v1.2h-1zM1809 511h2v1.2h-2zM1812 511h9v1.2h-9zM1822 511h2v1.2h-2zM1825 511h5v1.2h-5zM1831 511h3v1.2h-3zM1835 511h6v1.2h-6zM1842 511h2v1.2h-2zM1845 511h3v1.2h-3zM1849 511h6v1.2h-6zM1811 517h1v1.2h-1zM1813 517h5v1.2h-5zM1819 517h5v1.2h-5zM1811 521h1v1.2h-1zM1813 521h8v1.2h-8zM1822 521h2v1.2h-2zM1825 521h4v1.2h-4zM1830 521h3v1.2h-3zM1834 521h6v1.2h-6zM1841 521h2v1.2h-2zM1844 521h6v1.2h-6zM1811 525h1v1.2h-1zM1813 525h8v1.2h-8zM1822 525h3v1.2h-3zM1826 525h6v1.2h-6zM1833 525h6v1.2h-6zM1811 531h1v1.2h-1zM1813 531h2v1.2h-2zM1816 531h9v1.2h-9zM1826 531h2v1.2h-2zM1829 531h5v1.2h-5zM1835 531h3v1.2h-3zM1839 531h6v1.2h-6zM1846 531h2v1.2h-2zM1849 531h3v1.2h-3zM1853 531h6v1.2h-6zM1815 537h1v1.2h-1zM1817 537h5v1.2h-5zM1823 537h5v1.2h-5zM1815 541h1v1.2h-1zM1817 541h8v1.2h-8zM1826 541h2v1.2h-2zM1829 541h4v1.2h-4zM1834 541h3v1.2h-3zM1838 541h6v1.2h-6zM1845 541h2v1.2h-2zM1848 541h6v1.2h-6zM1815 547h1v1.2h-1zM1817 547h8v1.2h-8zM1826 547h3v1.2h-3zM1830 547h6v1.2h-6zM1837 547h6v1.2h-6zM1815 553h1v1.2h-1zM1817 553h2v1.2h-2zM1820 553h9v1.2h-9zM1830 553h2v1.2h-2zM1833 553h5v1.2h-5zM1839 553h3v1.2h-3zM1843 553h6v1.2h-6zM1850 553h2v1.2h-2zM1853 553h3v1.2h-3zM1857 553h6v1.2h-6zM1819 559h1v1.2h-1zM1821 559h5v1.2h-5zM1827 559h5v1.2h-5zM1819 573h1v1.2h-1zM1821 573h5v1.2h-5zM1827 573h5v1.2h-5zM1815 589h1v1.2h-1zM1817 589h5v1.2h-5zM1823 589h5v1.2h-5zM1811 605h1v1.2h-1zM1813 605h5v1.2h-5zM1819 605h5v1.2h-5zM1807 621h1v1.2h-1zM1809 621h5v1.2h-5zM1815 621h5v1.2h-5zM1803 637h1v1.2h-1zM1805 637h5v1.2h-5zM1811 637h5v1.2h-5zM1799 653h1v1.2h-1zM1801 653h5v1.2h-5zM1807 653h5v1.2h-5zM1799 665h1v1.2h-1zM1801 665h5v1.2h-5zM1807 665h5v1.2h-5zM1799 669h1v1.2h-1zM1801 669h8v1.2h-8zM1810 669h2v1.2h-2zM1813 669h4v1.2h-4zM1818 669h3v1.2h-3zM1822 669h6v1.2h-6zM1829 669h2v1.2h-2zM1832 669h6v1.2h-6zM1799 675h1v1.2h-1zM1801 675h8v1.2h-8zM1810 675h3v1.2h-3zM1814 675h6v1.2h-6zM1821 675h6v1.2h-6zM1799 681h1v1.2h-1zM1801 681h2v1.2h-2zM1804 681h9v1.2h-9zM1814 681h2v1.2h-2zM1817 681h5v1.2h-5zM1823 681h3v1.2h-3zM1827 681h6v1.2h-6zM1834 681h2v1.2h-2zM1837 681h3v1.2h-3zM1841 681h6v1.2h-6zM1803 687h1v1.2h-1zM1805 687h5v1.2h-5zM1811 687h5v1.2h-5zM1803 691h1v1.2h-1zM1805 691h8v1.2h-8zM1814 691h2v1.2h-2zM1817 691h4v1.2h-4zM1822 691h3v1.2h-3zM1826 691h6v1.2h-6zM1833 691h2v1.2h-2zM1836 691h6v1.2h-6zM1803 695h1v1.2h-1zM1805 695h8v1.2h-8zM1814 695h3v1.2h-3zM1818 695h6v1.2h-6zM1825 695h6v1.2h-6zM1803 701h1v1.2h-1zM1805 701h2v1.2h-2zM1808 701h9v1.2h-9zM1818 701h2v1.2h-2zM1821 701h5v1.2h-5zM1827 701h3v1.2h-3zM1831 701h6v1.2h-6zM1838 701h2v1.2h-2zM1841 701h3v1.2h-3zM1845 701h6v1.2h-6zM1807 707h1v1.2h-1zM1809 707h5v1.2h-5zM1815 707h5v1.2h-5zM1807 711h1v1.2h-1zM1809 711h8v1.2h-8zM1818 711h2v1.2h-2zM1821 711h4v1.2h-4zM1826 711h3v1.2h-3zM1830 711h6v1.2h-6zM1837 711h2v1.2h-2zM1840 711h6v1.2h-6zM1791 719h1v1.2h-1zM1793 719h8v1.2h-8zM1802 719h2v1.2h-2zM1805 719h5v1.2h-5zM1811 719h4v1.2h-4zM1816 719h5v1.2h-5zM1795 723h1v1.2h-1zM1797 723h8v1.2h-8zM1806 723h2v1.2h-2zM1809 723h6v1.2h-6zM1816 723h5v1.2h-5zM1795 737h1v1.2h-1zM1797 737h5v1.2h-5zM1803 737h5v1.2h-5zM1795 743h1v1.2h-1zM1797 743h5v1.2h-5zM1803 743h5v1.2h-5zM1795 747h1v1.2h-1zM1797 747h8v1.2h-8zM1806 747h2v1.2h-2zM1809 747h4v1.2h-4zM1814 747h3v1.2h-3zM1818 747h6v1.2h-6zM1825 747h2v1.2h-2zM1828 747h6v1.2h-6zM1795 751h1v1.2h-1zM1797 751h8v1.2h-8zM1806 751h3v1.2h-3zM1810 751h6v1.2h-6zM1817 751h6v1.2h-6zM1795 757h1v1.2h-1zM1797 757h2v1.2h-2zM1800 757h9v1.2h-9zM1810 757h2v1.2h-2zM1813 757h5v1.2h-5zM1819 757h3v1.2h-3zM1823 757h6v1.2h-6zM1830 757h2v1.2h-2zM1833 757h3v1.2h-3zM1837 757h6v1.2h-6zM1799 763h1v1.2h-1zM1801 763h5v1.2h-5zM1807 763h5v1.2h-5zM1799 767h1v1.2h-1zM1801 767h8v1.2h-8zM1810 767h2v1.2h-2zM1813 767h4v1.2h-4zM1818 767h3v1.2h-3zM1822 767h6v1.2h-6zM1829 767h2v1.2h-2zM1832 767h6v1.2h-6zM1799 773h1v1.2h-1zM1801 773h8v1.2h-8zM1810 773h3v1.2h-3zM1814 773h6v1.2h-6zM1821 773h6v1.2h-6zM1799 779h1v1.2h-1zM1801 779h2v1.2h-2zM1804 779h9v1.2h-9zM1814 779h2v1.2h-2zM1817 779h5v1.2h-5zM1823 779h3v1.2h-3zM1827 779h6v1.2h-6zM1834 779h2v1.2h-2zM1837 779h3v1.2h-3zM1841 779h6v1.2h-6zM1803 785h1v1.2h-1zM1805 785h5v1.2h-5zM1811 785h5v1.2h-5zM1803 789h1v1.2h-1zM1805 789h8v1.2h-8zM1814 789h2v1.2h-2zM1817 789h4v1.2h-4zM1822 789h3v1.2h-3zM1826 789h6v1.2h-6zM1833 789h2v1.2h-2zM1836 789h6v1.2h-6zM1803 795h1v1.2h-1zM1805 795h8v1.2h-8zM1814 795h3v1.2h-3zM1818 795h6v1.2h-6zM1825 795h6v1.2h-6zM1803 801h1v1.2h-1zM1805 801h2v1.2h-2zM1808 801h9v1.2h-9zM1818 801h2v1.2h-2zM1821 801h5v1.2h-5zM1827 801h3v1.2h-3zM1831 801h6v1.2h-6zM1838 801h2v1.2h-2zM1841 801h3v1.2h-3zM1845 801h6v1.2h-6zM1807 807h1v1.2h-1zM1809 807h5v1.2h-5zM1815 807h5v1.2h-5zM1807 811h1v1.2h-1zM1809 811h8v1.2h-8zM1818 811h2v1.2h-2zM1821 811h4v1.2h-4zM1826 811h3v1.2h-3zM1830 811h6v1.2h-6zM1837 811h2v1.2h-2zM1840 811h6v1.2h-6zM1807 815h1v1.2h-1zM1809 815h8v1.2h-8zM1818 815h3v1.2h-3zM1822 815h6v1.2h-6zM1829 815h6v1.2h-6zM1807 821h1v1.2h-1zM1809 821h2v1.2h-2zM1812 821h9v1.2h-9zM1822 821h2v1.2h-2zM1825 821h5v1.2h-5zM1831 821h3v1.2h-3zM1835 821h6v1.2h-6zM1842 821h2v1.2h-2zM1845 821h3v1.2h-3zM1849 821h6v1.2h-6zM1811 827h1v1.2h-1zM1813 827h5v1.2h-5zM1819 827h5v1.2h-5zM1811 831h1v1.2h-1zM1813 831h8v1.2h-8zM1822 831h2v1.2h-2zM1825 831h4v1.2h-4zM1830 831h3v1.2h-3zM1834 831h6v1.2h-6zM1841 831h2v1.2h-2zM1844 831h6v1.2h-6zM1811 837h1v1.2h-1zM1813 837h8v1.2h-8zM1822 837h3v1.2h-3zM1826 837h6v1.2h-6zM1833 837h6v1.2h-6zM1811 843h1v1.2h-1zM1813 843h2v1.2h-2zM1816 843h9v1.2h-9zM1826 843h2v1.2h-2zM1829 843h5v1.2h-5zM1835 843h3v1.2h-3zM1839 843h6v1.2h-6zM1846 843h2v1.2h-2zM1849 843h3v1.2h-3zM1853 843h6v1.2h-6zM1815 849h1v1.2h-1zM1817 849h5v1.2h-5zM1823 849h5v1.2h-5zM1815 853h1v1.2h-1zM1817 853h8v1.2h-8zM1826 853h2v1.2h-2zM1829 853h4v1.2h-4zM1834 853h3v1.2h-3zM1838 853h6v1.2h-6zM1845 853h2v1.2h-2zM1848 853h6v1.2h-6zM1815 859h1v1.2h-1zM1817 859h8v1.2h-8zM1826 859h3v1.2h-3zM1830 859h6v1.2h-6zM1837 859h6v1.2h-6zM1815 865h1v1.2h-1zM1817 865h2v1.2h-2zM1820 865h9v1.2h-9zM1830 865h2v1.2h-2zM1833 865h5v1.2h-5zM1839 865h3v1.2h-3zM1843 865h6v1.2h-6zM1850 865h2v1.2h-2zM1853 865h3v1.2h-3zM1857 865h6v1.2h-6zM1819 871h1v1.2h-1zM1821 871h5v1.2h-5zM1827 871h5v1.2h-5zM1819 885h1v1.2h-1zM1821 885h5v1.2h-5zM1827 885h5v1.2h-5zM1815 901h1v1.2h-1zM1817 901h5v1.2h-5zM1823 901h5v1.2h-5zM1811 917h1v1.2h-1zM1813 917h5v1.2h-5zM1819 917h5v1.2h-5zM1807 933h1v1.2h-1zM1809 933h5v1.2h-5zM1815 933h5v1.2h-5zM1803 949h1v1.2h-1zM1805 949h5v1.2h-5zM1811 949h5v1.2h-5zM1799 965h1v1.2h-1zM1801 965h5v1.2h-5zM1807 965h5v1.2h-5zM1799 977h1v1.2h-1zM1801 977h5v1.2h-5zM1807 977h5v1.2h-5zM1799 981h1v1.2h-1zM1801 981h8v1.2h-8zM1810 981h2v1.2h-2zM1813 981h4v1.2h-4zM1818 981h3v1.2h-3zM1822 981h6v1.2h-6zM1829 981h2v1.2h-2zM1832 981h6v1.2h-6z" fill="#6a9955" fill-opacity="0.33"/><path d="M1795 129h4v1.2h-4zM1795 137h4v1.2h-4zM1795 165h4v1.2h-4zM1799 187h4v1.2h-4zM1799 193h13v1.2h-13zM1803 215h13v1.2h-13zM1807 237h13v1.2h-13zM1811 259h13v1.2h-13zM1815 281h13v1.2h-13zM1815 295h13v1.2h-13zM1811 311h13v1.2h-13zM1807 327h13v1.2h-13zM1803 343h13v1.2h-13zM1795 355h13v1.2h-13zM1799 375h13v1.2h-13zM1803 397h13v1.2h-13zM1795 431h13v1.2h-13zM1795 437h13v1.2h-13zM1799 457h13v1.2h-13zM1803 479h13v1.2h-13zM1807 499h13v1.2h-13zM1811 519h13v1.2h-13zM1815 539h13v1.2h-13zM1819 561h13v1.2h-13zM1819 575h13v1.2h-13zM1815 591h13v1.2h-13zM1811 607h13v1.2h-13zM1807 623h13v1.2h-13zM1803 639h13v1.2h-13zM1799 655h13v1.2h-13zM1799 667h13v1.2h-13zM1803 689h13v1.2h-13zM1807 709h13v1.2h-13zM1795 739h13v1.2h-13zM1795 745h13v1.2h-13zM1799 765h13v1.2h-13zM1803 787h13v1.2h-13zM1807 809h13v1.2h-13zM1811 829h13v1.2h-13zM1815 851h13v1.2h-13zM1819 873h13v1.2h-13zM1819 887h13v1.2h-13zM1815 903h13v1.2h-13zM1811 919h13v1.2h-13zM1807 935h13v1.2h-13zM1803 951h13v1.2h-13zM1799 967h13v1.2h-13zM1799 979h13v1.2h-13z" fill="#4ec9b0" fill-opacity="0.33"/><path d="M1795 145h5v1.2h-5zM1795 151h2v1.2h-2zM1799 155h6v1.2h-6zM1795 175h5v1.2h-5zM1795 181h2v1.2h-2zM1799 203h5v1.2h-5zM1799 209h2v1.2h-2zM1803 225h5v1.2h-5zM1803 231h2v1.2h-2zM1807 247h5v1.2h-5zM1807 253h2v1.2h-2zM1811 269h5v1.2h-5zM1811 275h2v1.2h-2zM1811 287h5v1.2h-5zM1815 299h6v1.2h-6zM1807 303h5v1.2h-5zM1811 315h6v1.2h-6zM1803 319h5v1.2h-5zM1807 331h6v1.2h-6zM1799 335h5v1.2h-5zM1803 347h6v1.2h-6zM1795 363h5v1.2h-5zM1795 369h2v1.2h-2zM1799 385h5v1.2h-5zM1799 391h2v1.2h-2zM1803 405h5v1.2h-5zM1795 445h5v1.2h-5zM1795 451h2v1.2h-2zM1799 467h5v1.2h-5zM1799 473h2v1.2h-2zM1803 487h5v1.2h-5zM1803 493h2v1.2h-2zM1807 507h5v1.2h-5zM1807 513h2v1.2h-2zM1811 527h5v1.2h-5zM1811 533h2v1.2h-2zM1815 549h5v1.2h-5zM1815 555h2v1.2h-2zM1815 567h5v1.2h-5zM1819 579h6v1.2h-6zM1811 583h5v1.2h-5zM1815 595h6v1.2h-6zM1807 599h5v1.2h-5zM1811 611h6v1.2h-6zM1803 615h5v1.2h-5zM1807 627h6v1.2h-6zM1799 631h5v1.2h-5zM1803 643h6v1.2h-6zM1795 647h5v1.2h-5zM1799 659h6v1.2h-6zM1799 677h5v1.2h-5zM1799 683h2v1.2h-2zM1803 697h5v1.2h-5zM1803 703h2v1.2h-2zM1795 753h5v1.2h-5zM1795 759h2v1.2h-2zM1799 775h5v1.2h-5zM1799 781h2v1.2h-2zM1803 797h5v1.2h-5zM1803 803h2v1.2h-2zM1807 817h5v1.2h-5zM1807 823h2v1.2h-2zM1811 839h5v1.2h-5zM1811 845h2v1.2h-2zM1815 861h5v1.2h-5zM1815 867h2v1.2h-2zM1815 879h5v1.2h-5zM1819 891h6v1.2h-6zM1811 895h5v1.2h-5zM1815 907h6v1.2h-6zM1807 911h5v1.2h-5zM1811 923h6v1.2h-6zM1803 927h5v1.2h-5zM1807 939h6v1.2h-6zM1799 943h5v1.2h-5zM1803 955h6v1.2h-6zM1795 959h5v1.2h-5zM1799 971h6v1.2h-6z" fill="#c586c0" fill-opacity="0.33"/></svg><div class="abs" style="left:1903px;top:115px;width:1px;height:878px;background:#141414;"></div><div class="abs" style="left:1904px;top:757.8px;width:16px;height:44px;background:#2a2a2a;"></div><div class="abs" style="left:1904px;top:116px;width:16px;height:1.3px;background:#c8c8c8;"></div><div class="abs" style="left:1909px;top:117px;width:7px;height:4px;background:#a8a8a8;"></div><svg style="left:15px;top:997px;" width="14" height="17" viewBox="0 0 14 17"><path d="M1 15.5 L6.5 9.5 L1 3.5" stroke="#ffffff" stroke-width="1.4" fill="none"/><path d="M12.5 1 L7.5 5.5 L12.5 10" stroke="#ffffff" stroke-width="1.4" fill="none"/></svg><svg style="left:52px;top:997px;" width="20" height="18" viewBox="0 0 20 18"><circle cx="9.2" cy="9" r="7.6" stroke="#cccccc" stroke-width="1.3" fill="none"/><path d="M6 5.8 L12.4 12.2 M12.4 5.8 L6 12.2" stroke="#cccccc" stroke-width="1.3"/></svg><div class="t" style="left:73.31px;top:995.56px;font-size:15.7px;line-height:22px;color:#cccccc;font-weight:normal;transform:scaleX(1.1014)">0</div><svg style="left:87px;top:997px;" width="17" height="17" viewBox="0 0 17 17"><path d="M8 1.5 L15.3 15.3 H0.8 Z" stroke="#cccccc" stroke-width="1.3" fill="none" stroke-linejoin="round"/><path d="M8 6 V11 M8 12.5 V13.8" stroke="#cccccc" stroke-width="1.3"/></svg><div class="t" style="left:107.66px;top:995.56px;font-size:15.7px;line-height:22px;color:#cccccc;font-weight:normal;transform:scaleX(1.0218)">0</div><div class="t" style="left:1259.68px;top:995.56px;font-size:15.7px;line-height:22px;color:#cccccc;font-weight:normal;transform:scaleX(0.8952)">Ln 1, Col 1</div><div class="t" style="left:1348.30px;top:995.56px;font-size:15.7px;line-height:22px;color:#cccccc;font-weight:normal;transform:scaleX(0.8891)">Spaces: 4</div><div class="t" style="left:1428.83px;top:995.56px;font-size:15.7px;line-height:22px;color:#cccccc;font-weight:normal;transform:scaleX(0.9284)">UTF-8</div><div class="t" style="left:1488.96px;top:995.56px;font-size:15.7px;line-height:22px;color:#cccccc;font-weight:normal;transform:scaleX(0.8189)">CRLF</div><div class="t" style="left:1541.39px;top:995.56px;font-size:15.7px;line-height:22px;color:#cccccc;font-weight:normal;transform:scaleX(1.0009)">{ }</div><div class="t" style="left:1563.76px;top:995.56px;font-size:15.7px;line-height:22px;color:#cccccc;font-weight:normal;transform:scaleX(0.9865)">Python</div><svg style="left:1628px;top:998px;" width="22" height="18" viewBox="0 0 22 18"><rect x="4" y="1.5" width="6.3" height="6" rx="2.5" stroke="#cccccc" stroke-width="1.6" fill="none"/><rect x="10.3" y="1.5" width="6.3" height="6" rx="2.5" stroke="#cccccc" stroke-width="1.6" fill="none"/><path d="M5 7.5 Q1.8 8.3 1.9 11.2 Q2 14.8 10.3 15 Q18.6 14.8 18.7 11.2 Q18.8 8.3 15.6 7.5" stroke="#cccccc" stroke-width="1.7" fill="none"/><path d="M5.6 9 V13.5 M15 9 V13.5" stroke="#cccccc" stroke-width="1.5"/><rect x="7.7" y="9.5" width="2" height="3.8" fill="#cccccc"/><rect x="11" y="9.5" width="2" height="3.8" fill="#cccccc"/></svg><div class="t" style="left:1666.10px;top:995.56px;font-size:15.7px;line-height:22px;color:#cccccc;font-weight:normal;transform:scaleX(0.9591)">3.11.9 64-bit (Microsoft Store)</div><svg style="left:1884px;top:997px;" width="18" height="18" viewBox="0 0 18 18"><path d="M3 13 H15 L13.5 11 V7.5 Q13.5 2.5 9 2.5 Q4.5 2.5 4.5 7.5 V11 Z" stroke="#cccccc" stroke-width="1.3" fill="none" stroke-linejoin="round"/><path d="M7.3 15 Q9 17 10.7 15" stroke="#cccccc" stroke-width="1.3" fill="none"/></svg><svg style="left:584px;top:1035.4px;" width="31" height="31" viewBox="0 0 31 31"><defs><linearGradient id="wg" x1="0" y1="0" x2="1" y2="1"><stop offset="0" stop-color="#52c4f7"/><stop offset="1" stop-color="#0a6fd6"/></linearGradient></defs><rect x="0" y="0" width="14.7" height="14.7" fill="url(#wg)"/><rect x="16" y="0" width="14.7" height="14.7" fill="url(#wg)"/><rect x="0" y="16" width="14.7" height="14.7" fill="url(#wg)"/><rect x="16" y="16" width="14.7" height="14.7" fill="url(#wg)"/></svg><div class="abs" style="left:632px;top:1029.7px;width:271.4px;height:40.3px;background:#f7f7f7;border-radius:20px;border:1px solid #d4d4d4"></div><svg style="left:645px;top:1039px;" width="22" height="24" viewBox="0 0 22 24"><circle cx="9.5" cy="9.5" r="7.3" stroke="#1b1b1b" stroke-width="2" fill="none"/><path d="M14.8 14.8 L20 20" stroke="#1b1b1b" stroke-width="2.2" stroke-linecap="round"/></svg><div class="t" style="left:676.16px;top:1039.78px;font-size:16.5px;line-height:23px;color:#3b3b3b;font-weight:normal;transform:scaleX(1.0214)">Search</div><svg style="left:0px;top:0px;" width="1" height="1" viewBox="0 0 1 1"><defs><clipPath id="pc"><path d="M846 1066.5 Q838 1064 839 1058 Q837.5 1051 842 1048 Q843 1042 850 1042 Q853 1036 862 1037 Q870 1035 876 1039 Q882 1038 885 1040 Q886 1035 889 1034.5 Q893 1037 894 1041 Q899 1046 898 1052 Q902 1058 898 1063 Q895 1066.5 888 1066.5 Z"/></clipPath></defs><g clip-path="url(#pc)"><rect x="836" y="1032" width="68" height="36" fill="#eef2f5"/><path d="M839 1048 Q842 1040 852 1040 Q860 1036 872 1039 Q882 1039 886 1046 V1052 H839 Z" fill="#92cdf2"/><rect x="848" y="1044" width="34" height="8" fill="#d9cfc2"/><rect x="850" y="1045" width="10" height="3" fill="#e8c9a5"/><path d="M884 1052 V1045 Q884 1039 889 1038 Q894 1039 894 1045 V1052 Z" fill="#8a8580"/><rect x="883" y="1045" width="12" height="8" fill="#e9d3b8"/><rect x="872" y="1049.5" width="29" height="3" fill="#dc7a45"/><rect x="874" y="1052.5" width="26" height="7" fill="#f1dccb"/><rect x="890" y="1053" width="8" height="5" fill="#d98a70"/><rect x="839" y="1050" width="18" height="4.5" fill="#2c6a98"/><rect x="839" y="1054.5" width="18" height="2" fill="#e8e2da"/><rect x="839" y="1056.5" width="18" height="10" fill="#2f6f92"/><circle cx="844.5" cy="1061.5" r="3.2" fill="#3fb7a0"/><circle cx="852" cy="1061.5" r="3.2" fill="#3fb7a0"/><path d="M856 1054 L862 1054 L868 1067 H855 Z" fill="#8d98a6"/><circle cx="865" cy="1047" r="3.2" fill="#5f9e36"/><path d="M862 1052 Q870 1050 874 1056 Q876 1062 871 1067 H863 Q860 1060 862 1052 Z" fill="#6aa63a"/><path d="M870 1067 Q872 1059 880 1058 Q890 1057 898 1060 V1067 Z" fill="#8cbf4c"/><circle cx="878" cy="1063" r="1.2" fill="#f2d35a"/><circle cx="888" cy="1062" r="1.2" fill="#f2d35a"/></g></svg><svg style="left:0px;top:0px;" width="1" height="1" viewBox="0 0 1 1"><defs><linearGradient id="cpa" x1="0" y1="0" x2="0" y2="1"><stop offset="0" stop-color="#2e8ff0"/><stop offset="0.45" stop-color="#3fb9c9"/><stop offset="0.75" stop-color="#8cc64a"/><stop offset="1" stop-color="#f4c02c"/></linearGradient><linearGradient id="cpb" x1="0" y1="0" x2="0" y2="1"><stop offset="0" stop-color="#b17ae6"/><stop offset="0.5" stop-color="#ee6c98"/><stop offset="1" stop-color="#f58a2e"/></linearGradient></defs><path d="M926 1036 H943 Q947 1036 945.5 1040 L938 1057 Q936.5 1061 932 1061 H925 Q920.5 1061 921 1057 L922.5 1040 Q923 1036 926 1036 Z" fill="url(#cpa)"/><path d="M939 1040.5 H947 Q951.5 1040.5 951 1045 L950 1058 Q949.5 1062.5 945.5 1062.5 H933 Q929 1062.5 930.5 1058.5 L935.5 1044 Q936.7 1040.5 939 1040.5 Z" fill="url(#cpb)"/><path d="M937.5 1045 Q940.5 1044 941 1047 L939 1054 Q937 1057 934.5 1056 Z" fill="#f2f2f2"/></svg><svg style="left:0px;top:0px;" width="1" height="1" viewBox="0 0 1 1"><path d="M976 1039 Q976 1037 978 1037 H986 L989 1040 H1004 Q1006 1040 1006 1042 V1063.3 H976 Z" fill="#e9a92b"/><path d="M976 1043 H1006 V1063.3 H976 Z" fill="#fbc940"/><rect x="981.5" y="1056" width="19" height="7.3" rx="2" fill="#1b78d0"/></svg><div class="abs" style="left:985px;top:1069px;width:10px;height:3px;background:#8a8a8a;border-radius:1.5px"></div><svg style="left:0px;top:0px;" width="1" height="1" viewBox="0 0 1 1"><circle cx="1045.7" cy="1049.6" r="14.8" fill="#e5132b"/><path d="M1037.5 1046 L1041 1044 L1042.5 1047 L1045 1043.5 L1047.5 1046 L1050 1042.5 L1052 1045.5 L1053.5 1044 V1054 L1052 1056 L1049 1055 H1042 L1039 1051 Z" fill="#ffffff"/></svg><svg style="left:0px;top:0px;" width="1" height="1" viewBox="0 0 1 1"><path d="M1093.5 1041 V1038.5 Q1093.5 1036.5 1095.5 1036.5 H1105 Q1107 1036.5 1107 1038.5 V1041" stroke="#2fa3e6" stroke-width="2" fill="none"/><rect x="1086" y="1040" width="29.2" height="25" rx="3.5" fill="#1d5199"/><rect x="1095" y="1047" width="5.2" height="5.2" fill="#f0562a"/><rect x="1101" y="1047" width="5.2" height="5.2" fill="#78b82a"/><rect x="1095" y="1053" width="5.2" height="5.2" fill="#1ea7ee"/><rect x="1101" y="1053" width="5.2" height="5.2" fill="#fdb924"/></svg><svg style="left:1139.6px;top:1035px;" width="31" height="31" viewBox="0 0 31 31"><circle cx="15.5" cy="15.5" r="15.3" fill="#2d8cff"/><text x="15.5" y="18.5" text-anchor="middle" font-family="Liberation Sans" font-weight="bold" font-size="8" fill="#ffffff">zoom</text></svg><div class="abs" style="left:1187.7px;top:1026px;width:46.8px;height:46.5px;background:#ececec;border-radius:5px"></div><svg style="left:0px;top:0px;" width="1" height="1" viewBox="0 0 1 1"><g transform="translate(1195,1035) scale(1.55) translate(-12.2,-11)"><path d="M26.3 11 L26.3 16.8 L14 26 L12.2 24.2 Z" fill="#0f6fc0"/><path d="M12.2 17.5 L14 15.8 L26.3 24.3 L26.3 30.7 Z" fill="#1a7fd2"/><path d="M26.3 11 L31.9 13.5 V28.5 L26.3 30.7 Z" fill="#2aa4ef"/></g></svg><div class="abs" style="left:1201px;top:1070px;width:19.5px;height:3px;background:#0067c0;border-radius:1.5px"></div><svg style="left:1250px;top:1036px;" width="36" height="34" viewBox="0 0 36 34"><circle cx="15" cy="15" r="14" fill="#db3a2f"/><path d="M15 15 L27.1 8 A14 14 0 0 1 15 29 Z" fill="#f5c12c"/><path d="M15 15 L15 29 A14 14 0 0 1 2.9 8 Z" fill="#2ea54a"/><circle cx="15" cy="15" r="6.5" fill="#ffffff"/><circle cx="15" cy="15" r="5" fill="#1a73e8"/></svg><svg style="left:1267px;top:1029px;" width="20" height="20" viewBox="0 0 20 20"><circle cx="10" cy="10" r="9.6" fill="#d9ccb2"/><path d="M4 5 Q9 1 14 4 Q17 8 15 13 Q10 12 6 14 Q3 10 4 5 Z" fill="#a8916e"/><path d="M3 14 Q10 18 17 14 Q15 19 10 19.5 Q5 19 3 14 Z" fill="#9b7fd0"/><circle cx="10" cy="10" r="9.6" stroke="#eeeeee" stroke-width="0.8" fill="none"/></svg><div class="abs" style="left:1261px;top:1069px;width:10px;height:3px;background:#8a8a8a;border-radius:1.5px"></div><svg style="left:1305px;top:1036px;" width="36" height="34" viewBox="0 0 36 34"><circle cx="15" cy="15" r="14" fill="#db3a2f"/><path d="M15 15 L27.1 8 A14 14 0 0 1 15 29 Z" fill="#f5c12c"/><path d="M15 15 L15 29 A14 14 0 0 1 2.9 8 Z" fill="#2ea54a"/><circle cx="15" cy="15" r="6.5" fill="#ffffff"/><circle cx="15" cy="15" r="5" fill="#1a73e8"/></svg><svg style="left:1322px;top:1028px;" width="20" height="20" viewBox="0 0 20 20"><circle cx="10" cy="10" r="10" fill="#e4492f"/><text x="10" y="14" text-anchor="middle" font-family="Liberation Sans" font-size="11" fill="#ffffff">M</text></svg><div class="abs" style="left:1316px;top:1069px;width:10px;height:3px;background:#8a8a8a;border-radius:1.5px"></div><svg style="left:1593px;top:1044px;" width="16" height="10" viewBox="0 0 16 10"><path d="M1.5 8.5 L7.7 2 L14 8.5" stroke="#1b1b1b" stroke-width="1.6" fill="none"/></svg><svg style="left:1630px;top:1040px;" width="22" height="19" viewBox="0 0 22 19"><path d="M5 15.5 Q1 15.5 1 12 Q1 8.5 4.5 8.5 Q5.5 4 10 4 Q14 4 15.3 7.5 Q20 7.5 20.5 11.5 Q20.5 15.5 16.5 15.5 Z" stroke="#1b1b1b" stroke-width="1.5" fill="none"/><path d="M3 2 L19 18" stroke="#1b1b1b" stroke-width="1.6"/></svg><svg style="left:1684px;top:1049px;" width="10" height="12" viewBox="0 0 10 12"><path d="M7.5 1.5 Q2 0.5 2 4 Q2 6.5 6 6.3 Q1 7 1.5 9.5 Q2 11.5 8 10.5" stroke="#1b1b1b" stroke-width="1.3" fill="none"/></svg><svg style="left:1725.8px;top:1041px;" width="21" height="17" viewBox="0 0 21 17"><path d="M1 6 Q10 -2 19.5 6" stroke="#1b1b1b" stroke-width="1.6" fill="none"/><path d="M4 9.3 Q10 4 16.5 9.3" stroke="#1b1b1b" stroke-width="1.6" fill="none"/><path d="M7 12.5 Q10 10 13.5 12.5" stroke="#1b1b1b" stroke-width="1.6" fill="none"/><circle cx="10.2" cy="15" r="1.5" fill="#1b1b1b"/></svg><svg style="left:1756px;top:1041px;" width="21" height="17" viewBox="0 0 21 17"><path d="M1 6 H4.5 L9 2 V15 L4.5 11 H1 Z" stroke="#1b1b1b" stroke-width="1.4" fill="none" stroke-linejoin="round"/><path d="M12 6 Q13.5 8.5 12 11 M14.5 4 Q17.5 8.5 14.5 13 M17 2 Q21 8.5 17 15" stroke="#1b1b1b" stroke-width="1.4" fill="none"/></svg><svg style="left:1785px;top:1043px;" width="22" height="13" viewBox="0 0 22 13"><rect x="1" y="1.5" width="17" height="10" rx="2" stroke="#1b1b1b" stroke-width="1.4" fill="none"/><rect x="3" y="3.5" width="5" height="6" fill="#1b1b1b"/><rect x="19" y="4.5" width="2" height="4" rx="0.5" fill="#1b1b1b"/></svg><div class="t" style="left:1840.08px;top:1028.53px;font-size:15.5px;line-height:22px;color:#1b1b1b;font-weight:normal;transform:scaleX(0.9870)">1:43 AM</div><div class="t" style="left:1826.73px;top:1048.48px;font-size:15.5px;line-height:22px;color:#1b1b1b;font-weight:normal;transform:scaleX(0.9988)">7/23/2025</div><svg style="left:840px;top:945px;" width="240" height="80" viewBox="0 0 240 80"><g stroke="#6b6b6b" fill="none" stroke-linecap="round"><path d="M44 12.4 V62" stroke-width="10"/><path d="M44 62 H198" stroke-width="11" stroke-linecap="butt"/><path d="M26 37 A16 16 0 1 0 40 61" stroke-width="10"/><circle cx="81" cy="46" r="15" stroke-width="10"/><path d="M122.6 45.2 L120.5 62 M144 45.2 L141.5 62 M161 41 L158.5 62 M177.4 38.5 L174 62" stroke-width="10"/><circle cx="213" cy="52.6" r="16" stroke-width="10.5"/></g><g fill="#6b6b6b"><circle cx="73.3" cy="14.1" r="6.7"/><circle cx="90" cy="14.1" r="6.7"/><circle cx="114.4" cy="28.1" r="6.7"/><circle cx="130.4" cy="28.1" r="6.7"/></g></svg><div class="t" style="left:843.11px;top:1014.56px;font-size:33px;line-height:46px;color:rgba(0,0,0,0.055);font-weight:normal;transform:scaleX(1.2499)">mostaql.com</div></body></html>
